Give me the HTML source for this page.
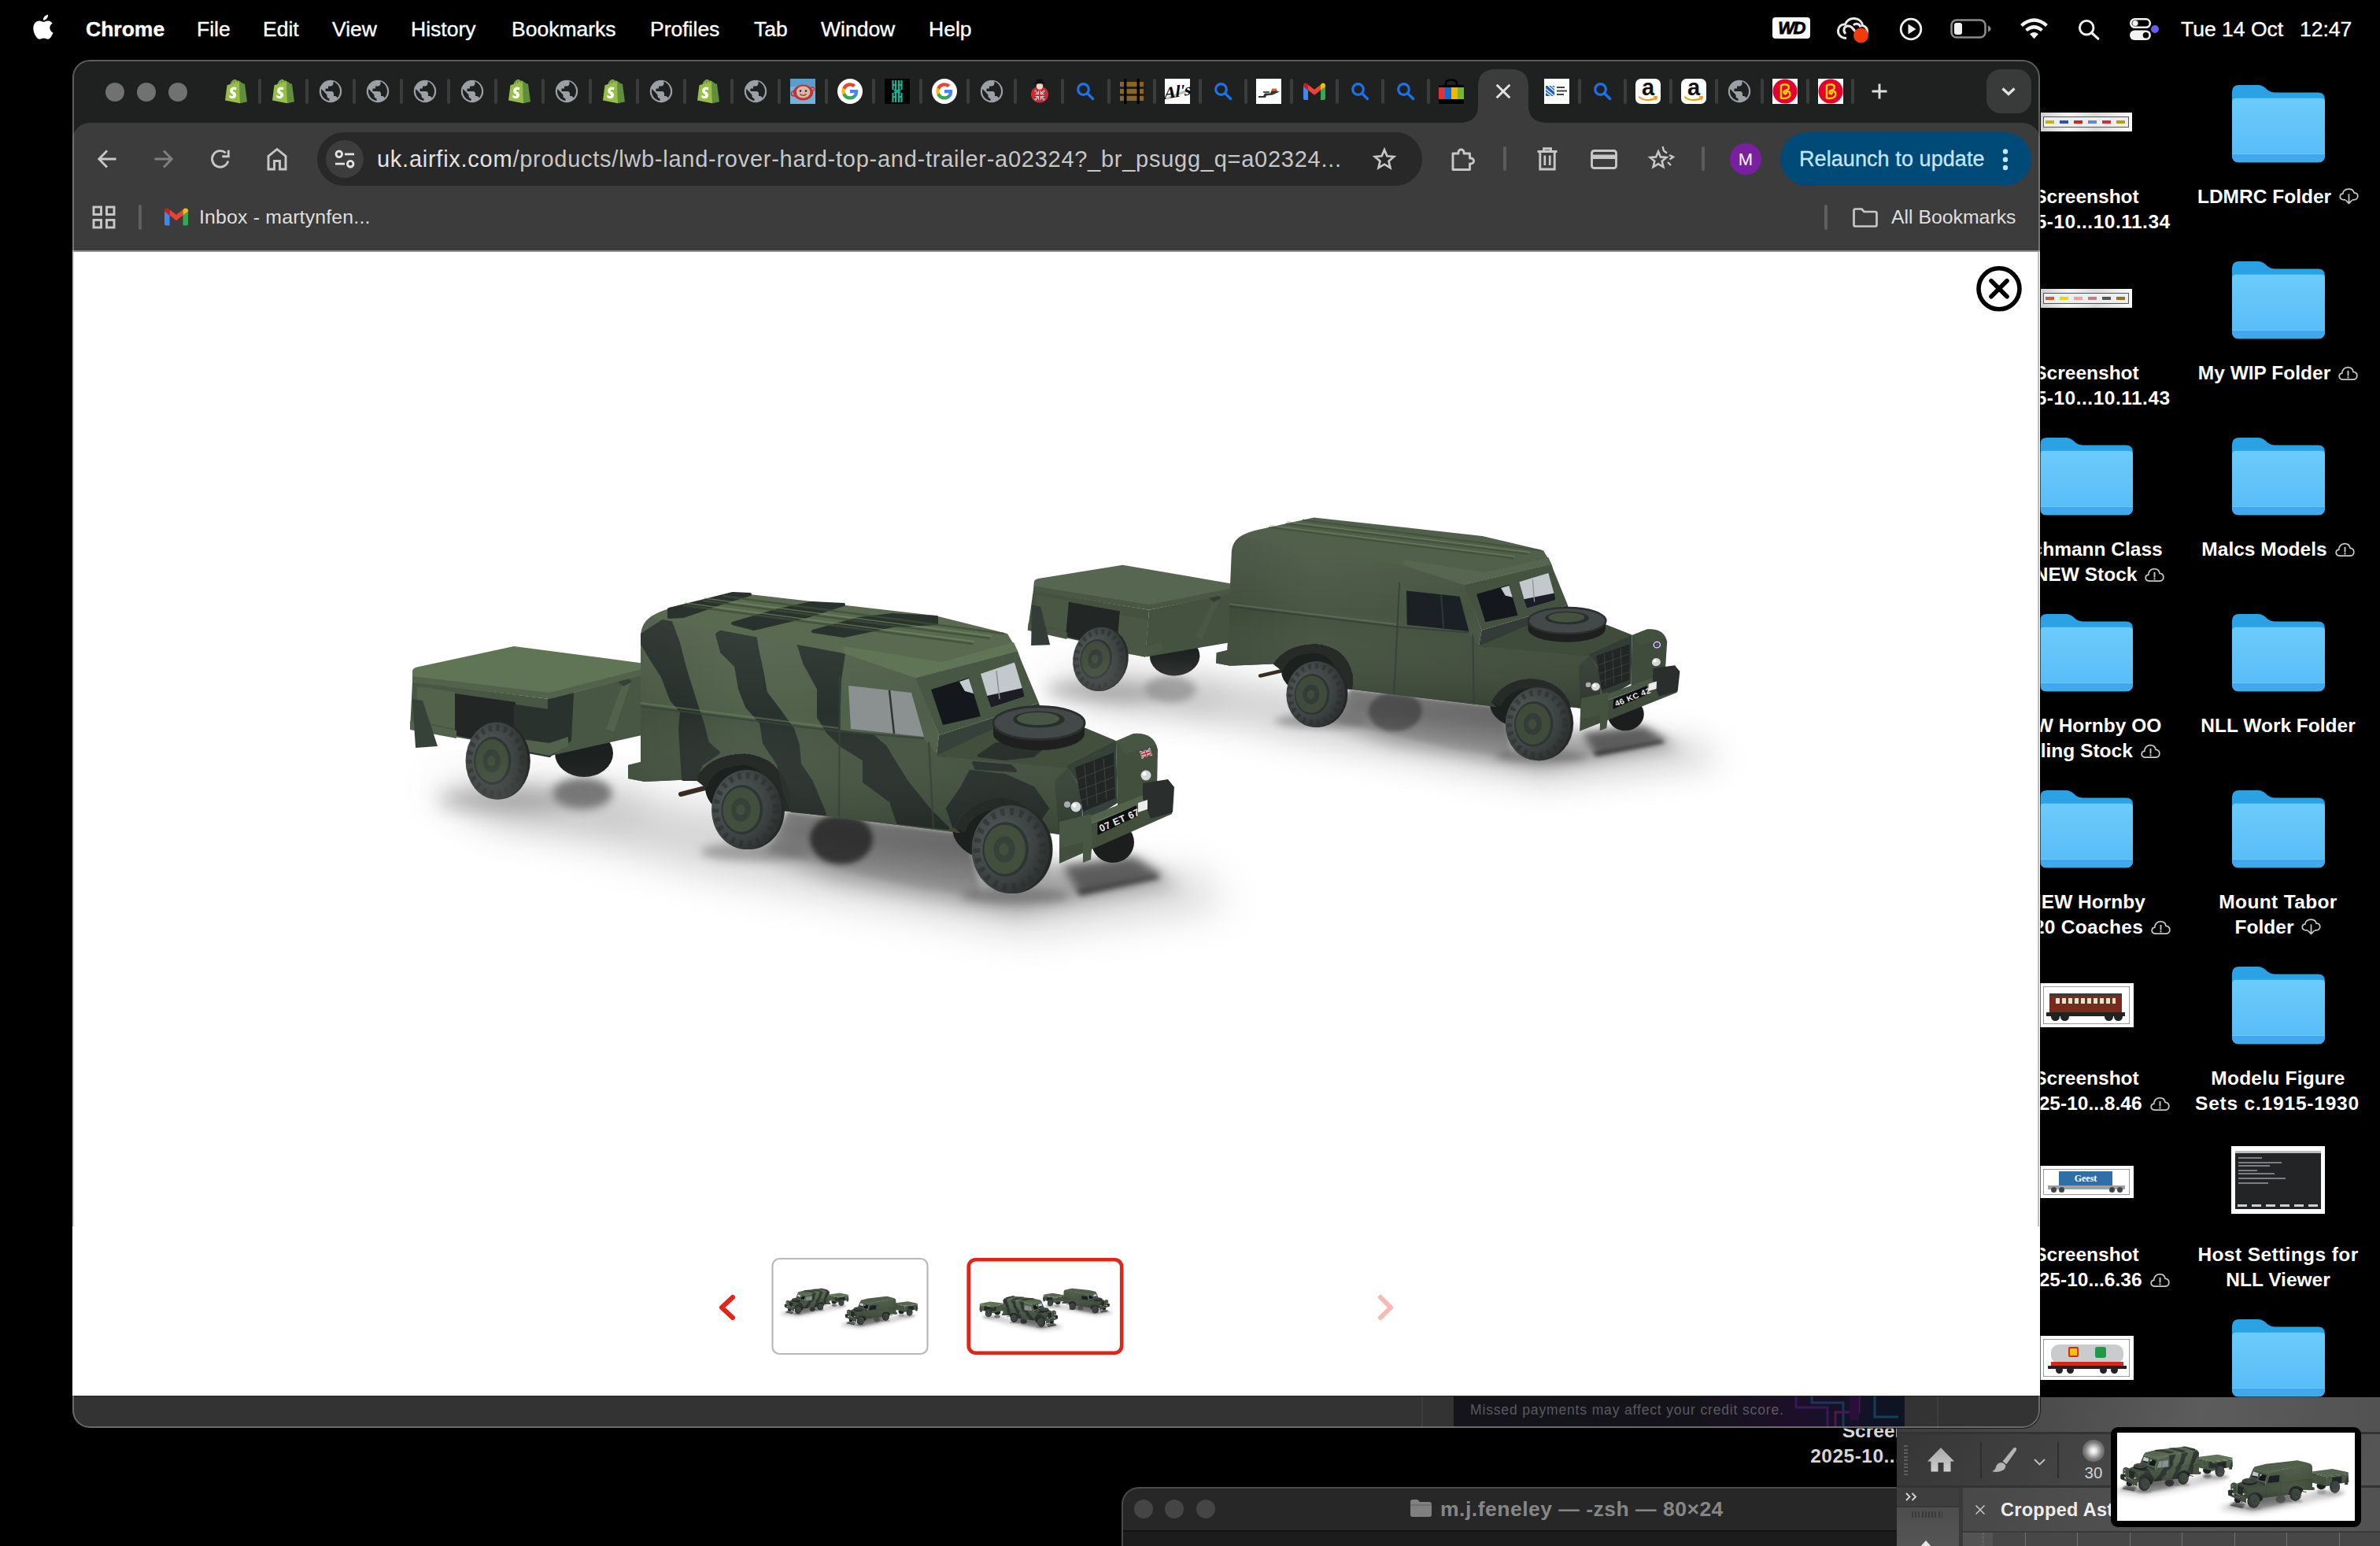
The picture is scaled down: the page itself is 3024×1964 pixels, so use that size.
<!DOCTYPE html>
<html><head><meta charset="utf-8"><title>LWB Land Rover</title>
<style>
*{box-sizing:border-box;margin:0;padding:0}
html,body{width:3024px;height:1964px;overflow:hidden;background:#000}
body{position:relative;font-family:"Liberation Sans",sans-serif;color:#fff}
.a{position:absolute;white-space:nowrap}
svg{position:absolute;overflow:visible}
/* menu bar */
.mi{position:absolute;top:14.500px;font-size:26.500px;-webkit-text-stroke:0.350px #fff;line-height:44px;height:44px;white-space:nowrap;color:#fff}
/* desktop */
.lbl{position:absolute;font-weight:bold;font-size:24.5px;line-height:32px;text-align:center;white-space:nowrap;color:#fff}
/* chrome */
#win{position:absolute;left:92px;top:76px;width:2500px;height:1738px;border-radius:22px;background:#1f2020;overflow:hidden;box-shadow:0 0 0 1px rgba(0,0,0,.6)}
#win:after{content:"";position:absolute;inset:0;border-radius:22px;border:2px solid rgba(255,255,255,.28);pointer-events:none}
#tool{position:absolute;left:0;top:80px;width:2500px;height:163px;background:#3c3c3c;border-radius:22px 22px 0 0}
#page{position:absolute;left:0;top:242px;width:2500px;height:1455px;background:#fff;border-top:2px solid #8d8d8d}
#strip{position:absolute;left:0;top:1698px;width:2500px;height:40px;background:#333}
.sep{position:absolute;top:24px;width:4px;height:32px;border-radius:2px;background:#3b3d3d}
.fav{position:absolute;top:24px;width:32px;height:32px}
.c1{fill:var(--c1)}.c2{fill:var(--c2)}.c3{fill:var(--c3)}.c4{fill:var(--c4)}.c5{fill:var(--c5)}.c6{fill:var(--c6)}.win{fill:var(--win)}.camo{display:var(--camo);fill:#2a322e;stroke:#2a322e;stroke-width:4;stroke-linejoin:round}
.pl{display:var(--camo)}.pr{display:var(--nocamo)}.blob{opacity:var(--blob)}
.ln{fill:none;stroke:var(--c4);stroke-width:2.5}
.rigL{--c1:#52624b;--c2:#596a51;--c3:#485743;--c4:#364239;--c5:#607556;--c6:#414f3c;--win:#8b9091;--camo:inline;--nocamo:none;--blob:.8}
.rigR{--c1:#495744;--c2:#51604b;--c3:#44523f;--c4:#333c37;--c5:#576650;--c6:#3f4c3b;--win:#1b2024;--camo:none;--nocamo:inline;--blob:.45}
</style></head><body>

<!-- ================= MENU BAR ================= -->
<div id="menubar" class="a" style="left:0;top:0;width:3024px;height:76px;background:#000">
<svg style="left:41px;top:18px" width="27" height="33" viewBox="0 0 27 33"><path fill="#fff" d="M22.3 17.5c0-4 3.300-5.900 3.400-6-1.900-2.700-4.700-3.100-5.700-3.100-2.400-.2-4.700 1.400-5.900 1.400s-3.100-1.400-5.100-1.300c-2.600 0-5 1.500-6.400 3.900-2.700 4.700-.7 11.700 2 15.500 1.300 1.900 2.800 4 4.900 3.900 2-.1 2.700-1.300 5.100-1.300 2.400 0 3 1.300 5.100 1.200 2.100 0 3.400-1.900 4.700-3.800 1.500-2.200 2.100-4.300 2.100-4.400-.1 0-4.100-1.600-4.200-6zM18.400 5.600c1.100-1.300 1.800-3.100 1.600-4.900-1.500.1-3.400 1-4.500 2.300-1 1.100-1.800 3-1.600 4.700 1.700.2 3.400-.8 4.500-2.100z"/></svg>
<div class="mi" style="left:109px;font-weight:bold">Chrome</div>
<div class="mi" style="left:250px">File</div>
<div class="mi" style="left:334px">Edit</div>
<div class="mi" style="left:422px">View</div>
<div class="mi" style="left:522px">History</div>
<div class="mi" style="left:650px">Bookmarks</div>
<div class="mi" style="left:826px">Profiles</div>
<div class="mi" style="left:958px">Tab</div>
<div class="mi" style="left:1043px">Window</div>
<div class="mi" style="left:1180px">Help</div>
<div class="mi" style="left:2771px">Tue 14 Oct</div>
<div class="mi" style="left:2922px">12:47</div>
<!-- WD -->
<div class="a" style="left:2252px;top:22px;width:48px;height:27px;border-radius:4px;background:#fff"></div>
<div class="a" style="left:2254px;top:22px;width:44px;height:27px;text-align:center;font-size:22px;line-height:28px;font-weight:bold;font-style:italic;color:#000;letter-spacing:-1.500px;-webkit-text-stroke:0.800px #000">WD</div>
<!-- creative cloud -->
<svg style="left:2333px;top:21px" width="44" height="34" viewBox="0 0 44 34"><g fill="none" stroke="#e8e8e8" stroke-width="3"><path d="M13 27.500 C6 27.500 2 23 2.500 17.500 C3 12.500 7 9.500 11.500 10 C13.500 5 18 2 23.500 2.500 C29.500 3 33 7 33.500 11.500 C37.500 12.500 39.500 15.500 39.500 19 C39.500 24 36 27.500 31 27.500"/><path d="M12 22 C8 18 10 12.500 14.500 12 C18.500 11.600 21 15 21 15 L26 21"/><path d="M22 11 C25 8 30 9 31 13.500"/></g><circle cx="31.500" cy="24" r="9.500" fill="#f03c0c"/></svg>
<!-- play -->
<svg style="left:2413px;top:22px" width="30" height="30" viewBox="0 0 30 30"><circle cx="15" cy="15" r="12.800" fill="none" stroke="#f0f0f0" stroke-width="2.800"/><path d="M11.500 8.500 L21.500 15 L11.500 21.500 Z" fill="#f0f0f0"/></svg>
<!-- battery -->
<svg style="left:2478px;top:24px" width="54" height="26" viewBox="0 0 54 26"><rect x="1.500" y="1.500" width="43" height="22" rx="6.500" fill="none" stroke="#8a8a8a" stroke-width="2.600"/><rect x="5" y="5" width="10" height="15" rx="3" fill="#f0f0f0"/><path d="M48 8.500 Q51.500 10 51.500 12.500 Q51.500 15 48 16.500 Z" fill="#8a8a8a"/></svg>
<!-- wifi -->
<svg style="left:2566px;top:23px" width="37" height="27" viewBox="0 0 37 27"><g fill="none" stroke="#f2f2f2" stroke-width="4.200" stroke-linecap="butt"><path d="M2.500 9.500 Q18.500 -4.500 34.500 9.500"/><path d="M8.500 15.500 Q18.500 7 28.500 15.500"/></g><path d="M13 20.300 Q18.500 15.500 24 20.300 L18.500 26.200 Z" fill="#f2f2f2"/></svg>
<!-- search -->
<svg style="left:2640px;top:24px" width="28" height="27" viewBox="0 0 28 27"><circle cx="11.200" cy="11.200" r="8.800" fill="none" stroke="#f2f2f2" stroke-width="2.900"/><path d="M17.500 17.500 L25.800 25.200" stroke="#f2f2f2" stroke-width="3.200" stroke-linecap="round"/></svg>
<!-- control centre -->
<svg style="left:2706px;top:23px" width="40" height="28" viewBox="0 0 40 28"><rect x="1.300" y="1.300" width="24.500" height="10.500" rx="5.250" fill="none" stroke="#f2f2f2" stroke-width="2.600"/><circle cx="7" cy="6.500" r="3.600" fill="#f2f2f2"/><rect x="0" y="15.500" width="27" height="12.500" rx="6.250" fill="#f2f2f2"/><circle cx="20.500" cy="21.700" r="3.800" fill="#000"/><circle cx="32" cy="14" r="5" fill="#6b5cf0"/></svg>

</div>

<!-- ================= DESKTOP ICONS ================= -->
<div id="desk">
<svg width="0" height="0" style="left:0;top:0"><defs>
<linearGradient id="ff" x1="0" y1="0" x2="0" y2="1"><stop offset="0" stop-color="#6ccbfb"/><stop offset="1" stop-color="#56bbf5"/></linearGradient>
<symbol id="folder" viewBox="0 0 118 98.500"><path d="M0 9 Q0 0 9 0 L33 0 Q38 0 42 3.500 L46 7 Q49 9.400 54 9.400 L109 9.400 Q118 9.400 118 18 L118 40 L0 40 Z" fill="#2aa3e6"/>
<path d="M0 22 Q0 16.800 5 16.800 L113 16.800 Q118 16.800 118 22 L118 89.500 Q118 98.500 109 98.500 L9 98.500 Q0 98.500 0 89.500 Z" fill="url(#ff)"/>
<path d="M0 87.500 L118 87.500 L118 89.500 Q118 98.500 109 98.500 L9 98.500 Q0 98.500 0 89.500 Z" fill="#3fa9ec"/><rect x="0" y="87" width="118" height="1" fill="#7dd2fc" opacity=".7"/></symbol>
<symbol id="cw" viewBox="0 0 26 19"><path d="M6.500 17.500 C3 17.500 1 15.300 1.200 12.800 C1.400 10.600 3 9.200 5 9 C5 5 8 1.300 12.500 1.300 C16.500 1.300 19.200 3.800 19.800 7.200 C22.800 7.400 24.800 9.600 24.800 12.300 C24.800 15.300 22.500 17.500 19.500 17.500 Z" fill="none" stroke="#c9c9c9" stroke-width="1.800"/><path d="M13 6.500 V11.800" stroke="#c9c9c9" stroke-width="2" stroke-linecap="round"/><circle cx="13" cy="14.600" r="1.200" fill="#c9c9c9"/></symbol>
<symbol id="cd" viewBox="0 0 26 22"><path d="M8.500 15.500 L6.500 15.500 C3 15.500 1 13.500 1.200 11 C1.400 8.800 3 7.400 5 7.200 C5 4 8 1.200 12.500 1.200 C16.500 1.200 19.200 3.300 19.800 6.200 C22.800 6.400 24.800 8.300 24.800 10.800 C24.800 13.500 22.500 15.500 19.500 15.500 L17.500 15.500" fill="none" stroke="#c9c9c9" stroke-width="1.800"/><path d="M13 8.500 V20 M9.200 16.500 L13 20.300 L16.800 16.500" fill="none" stroke="#c9c9c9" stroke-width="1.800" stroke-linecap="round" stroke-linejoin="round"/></symbol>
</defs></svg>
<svg style="left:2835.5px;top:108px" width="118" height="98.500"><use href="#folder"/></svg>
<svg style="left:2835.5px;top:332px" width="118" height="98.500"><use href="#folder"/></svg>
<svg style="left:2835.5px;top:556px" width="118" height="98.500"><use href="#folder"/></svg>
<svg style="left:2835.5px;top:780px" width="118" height="98.500"><use href="#folder"/></svg>
<svg style="left:2835.5px;top:1004px" width="118" height="98.500"><use href="#folder"/></svg>
<svg style="left:2835.5px;top:1228px" width="118" height="98.500"><use href="#folder"/></svg>
<svg style="left:2835.5px;top:1676px" width="118" height="98.500"><use href="#folder"/></svg>
<div class="lbl" style="left:2694.5px;top:234px;width:400px;letter-spacing:0.00px">LDMRC Folder<svg style="position:relative;display:inline-block;vertical-align:-2px;margin-left:10px" width="25" height="21"><use href="#cd"/></svg></div>
<div class="lbl" style="left:2694.5px;top:458px;width:400px;letter-spacing:0.00px">My WIP Folder<svg style="position:relative;display:inline-block;vertical-align:-2px;margin-left:10px" width="25" height="19"><use href="#cw"/></svg></div>
<div class="lbl" style="left:2694.5px;top:682px;width:400px;letter-spacing:0.00px">Malcs Models<svg style="position:relative;display:inline-block;vertical-align:-2px;margin-left:10px" width="25" height="19"><use href="#cw"/></svg></div>
<div class="lbl" style="left:2694.5px;top:906px;width:400px;letter-spacing:0.00px">NLL Work Folder</div>
<div class="lbl" style="left:2694.5px;top:1130px;width:400px;letter-spacing:0.35px">Mount Tabor</div>
<div class="lbl" style="left:2694.5px;top:1162px;width:400px;letter-spacing:0.00px">Folder<svg style="position:relative;display:inline-block;vertical-align:-2px;margin-left:10px" width="25" height="21"><use href="#cd"/></svg></div>
<div class="lbl" style="left:2694.5px;top:1354px;width:400px;letter-spacing:0.22px">Modelu Figure</div>
<div class="lbl" style="left:2693.5px;top:1386px;width:400px;letter-spacing:0.80px">Sets c.1915-1930</div>
<div class="lbl" style="left:2694.5px;top:1578px;width:400px;letter-spacing:0.40px">Host Settings for</div>
<div class="lbl" style="left:2694.5px;top:1610px;width:400px;letter-spacing:0.00px">NLL Viewer</div>
<div class="a" style="left:2835px;top:1456px;width:119px;height:86px;background:#fff"></div><div class="a" style="left:2840px;top:1462px;width:109px;height:74px;background:#222426"></div>
<div class="a" style="left:2840px;top:1462px;width:109px;height:3px;background:#bdbdbd"></div>
<div class="a" style="left:2844px;top:1470px;width:30px;height:2px;background:#7c7f82"></div>
<div class="a" style="left:2844px;top:1476px;width:55px;height:2px;background:#7c7f82"></div>
<div class="a" style="left:2844px;top:1480px;width:40px;height:2px;background:#7c7f82"></div>
<div class="a" style="left:2844px;top:1486px;width:24px;height:2px;background:#7c7f82"></div>
<div class="a" style="left:2844px;top:1490px;width:46px;height:2px;background:#7c7f82"></div>
<div class="a" style="left:2844px;top:1496px;width:60px;height:2px;background:#7c7f82"></div>
<div class="a" style="left:2844px;top:1502px;width:38px;height:2px;background:#7c7f82"></div>
<div class="a" style="left:2843px;top:1530px;width:12px;height:3px;background:#cfcfcf"></div>
<div class="a" style="left:2861px;top:1530px;width:12px;height:3px;background:#cfcfcf"></div>
<div class="a" style="left:2879px;top:1530px;width:12px;height:3px;background:#cfcfcf"></div>
<div class="a" style="left:2897px;top:1530px;width:12px;height:3px;background:#cfcfcf"></div>
<div class="a" style="left:2915px;top:1530px;width:12px;height:3px;background:#cfcfcf"></div>
<div class="a" style="left:2933px;top:1530px;width:12px;height:3px;background:#cfcfcf"></div>
<svg style="left:2592.0px;top:556px" width="118" height="98.500"><use href="#folder"/></svg>
<svg style="left:2592.0px;top:780px" width="118" height="98.500"><use href="#folder"/></svg>
<svg style="left:2592.0px;top:1004px" width="118" height="98.500"><use href="#folder"/></svg>
<div class="lbl" style="left:2451.0px;top:234px;width:400px;letter-spacing:0.00px">Screenshot</div>
<div class="lbl" style="left:2451.0px;top:266px;width:400px;letter-spacing:0.50px">2025-10...10.11.34</div>
<div class="lbl" style="left:2451.0px;top:458px;width:400px;letter-spacing:0.00px">Screenshot</div>
<div class="lbl" style="left:2451.0px;top:490px;width:400px;letter-spacing:0.50px">2025-10...10.11.43</div>
<div class="lbl" style="left:2449.0px;top:682px;width:400px;letter-spacing:0.00px">Bachmann Class</div>
<div class="lbl" style="left:2467.6px;top:714px;width:400px;letter-spacing:0.00px">NEW Stock<svg style="position:relative;display:inline-block;vertical-align:-2px;margin-left:10px" width="25" height="19"><use href="#cw"/></svg></div>
<div class="lbl" style="left:2449.0px;top:906px;width:400px;letter-spacing:0.00px">NEW Hornby OO</div>
<div class="lbl" style="left:2449.0px;top:938px;width:400px;letter-spacing:0.00px">Rolling Stock<svg style="position:relative;display:inline-block;vertical-align:-2px;margin-left:10px" width="25" height="19"><use href="#cw"/></svg></div>
<div class="lbl" style="left:2451.0px;top:1130px;width:400px;letter-spacing:0.00px">NEW Hornby</div>
<div class="lbl" style="left:2471.0px;top:1162px;width:400px;letter-spacing:0.30px">20 Coaches<svg style="position:relative;display:inline-block;vertical-align:-2px;margin-left:10px" width="25" height="19"><use href="#cw"/></svg></div>
<div class="lbl" style="left:2451.0px;top:1354px;width:400px;letter-spacing:0.00px">Screenshot</div>
<div class="lbl" style="left:2460.0px;top:1386px;width:400px;letter-spacing:0.00px">2025-10...8.46<svg style="position:relative;display:inline-block;vertical-align:-2px;margin-left:10px" width="25" height="19"><use href="#cw"/></svg></div>
<div class="lbl" style="left:2451.0px;top:1578px;width:400px;letter-spacing:0.00px">Screenshot</div>
<div class="lbl" style="left:2460.0px;top:1610px;width:400px;letter-spacing:0.00px">2025-10...6.36<svg style="position:relative;display:inline-block;vertical-align:-2px;margin-left:10px" width="25" height="19"><use href="#cw"/></svg></div>
<div class="a" style="left:2593px;top:143px;width:116px;height:24px;background:linear-gradient(90deg,#d0d0d0,#f4f4f4 30%,#dcdcdc 60%,#fafafa)"></div>
<div class="a" style="left:2596px;top:148px;width:109px;height:14px;border:1px solid #555;background:#eee"></div>
<div class="a" style="left:2599px;top:153px;width:11px;height:4px;background:#c8b400"></div>
<div class="a" style="left:2617px;top:153px;width:11px;height:4px;background:#2a50c8"></div>
<div class="a" style="left:2635px;top:153px;width:11px;height:4px;background:#e02020"></div>
<div class="a" style="left:2653px;top:153px;width:11px;height:4px;background:#5a8ad8"></div>
<div class="a" style="left:2671px;top:153px;width:11px;height:4px;background:#d83030"></div>
<div class="a" style="left:2689px;top:153px;width:11px;height:4px;background:#b8a000"></div>
<div class="a" style="left:2593px;top:367px;width:116px;height:24px;background:linear-gradient(90deg,#d0d0d0,#f4f4f4 30%,#dcdcdc 60%,#fafafa)"></div>
<div class="a" style="left:2596px;top:372px;width:109px;height:14px;border:1px solid #555;background:#eee"></div>
<div class="a" style="left:2599px;top:377px;width:11px;height:4px;background:#d85a30"></div>
<div class="a" style="left:2617px;top:377px;width:11px;height:4px;background:#e8d800"></div>
<div class="a" style="left:2635px;top:377px;width:11px;height:4px;background:#f0a0a0"></div>
<div class="a" style="left:2653px;top:377px;width:11px;height:4px;background:#c08080"></div>
<div class="a" style="left:2671px;top:377px;width:11px;height:4px;background:#555"></div>
<div class="a" style="left:2689px;top:377px;width:11px;height:4px;background:#a07020"></div>
<div class="a" style="left:2592px;top:1249px;width:119px;height:56px;background:#fff"></div>
<div class="a" style="left:2604px;top:1262px;width:92px;height:24px;background:#7a2a1c;border-top:3px solid #3a3a3a"></div>
<div class="a" style="left:2612px;top:1268px;width:76px;height:7px;background:repeating-linear-gradient(90deg,#e8e0d0 0 5px,#7a2a1c 5px 8px)"></div>
<div class="a" style="left:2600px;top:1286px;width:100px;height:5px;background:#222"></div>
<div class="a" style="left:2606px;top:1286px;width:11px;height:11px;border-radius:50%;background:#222"></div>
<div class="a" style="left:2618px;top:1286px;width:11px;height:11px;border-radius:50%;background:#222"></div>
<div class="a" style="left:2674px;top:1286px;width:11px;height:11px;border-radius:50%;background:#222"></div>
<div class="a" style="left:2686px;top:1286px;width:11px;height:11px;border-radius:50%;background:#222"></div>
<div class="a" style="left:2592px;top:1481px;width:119px;height:41px;background:#fff"></div>
<div class="a" style="left:2616px;top:1488px;width:68px;height:18px;background:#2f6fa8;color:#fff;font:bold 12px 'Liberation Serif',serif;text-align:center;line-height:18px">Geest</div>
<div class="a" style="left:2602px;top:1506px;width:98px;height:5px;background:#9aa0a6"></div>
<div class="a" style="left:2606px;top:1508px;width:7px;height:7px;border-radius:50%;background:#444"></div>
<div class="a" style="left:2616px;top:1508px;width:7px;height:7px;border-radius:50%;background:#444"></div>
<div class="a" style="left:2680px;top:1508px;width:7px;height:7px;border-radius:50%;background:#444"></div>
<div class="a" style="left:2690px;top:1508px;width:7px;height:7px;border-radius:50%;background:#444"></div>
<div class="a" style="left:2592px;top:1697px;width:119px;height:56px;background:#fff"></div>
<div class="a" style="left:2606px;top:1708px;width:92px;height:24px;border-radius:10px;background:#c9cbcd"></div>
<div class="a" style="left:2606px;top:1730px;width:92px;height:5px;background:#d42a1e"></div>
<div class="a" style="left:2628px;top:1711px;width:13px;height:13px;border-radius:2px;background:#f4c400;border:2px solid #d42a1e"></div><div class="a" style="left:2662px;top:1711px;width:14px;height:14px;border-radius:3px;background:#1f9a48"></div>
<div class="a" style="left:2602px;top:1735px;width:100px;height:4px;background:#222"></div>
<div class="a" style="left:2612px;top:1736px;width:9px;height:9px;border-radius:50%;background:#222"></div>
<div class="a" style="left:2626px;top:1736px;width:9px;height:9px;border-radius:50%;background:#222"></div>
<div class="a" style="left:2668px;top:1736px;width:9px;height:9px;border-radius:50%;background:#222"></div>
<div class="a" style="left:2682px;top:1736px;width:9px;height:9px;border-radius:50%;background:#222"></div>
<div class="a" style="left:2596px;top:1253px;width:110px;height:48px;border:1px solid #9a9a9a"></div>
<div class="a" style="left:2596px;top:1485px;width:110px;height:33px;border:1px solid #9a9a9a"></div>
<div class="a" style="left:2596px;top:1701px;width:110px;height:48px;border:1px solid #9a9a9a"></div>
</div>

<!-- ================= BOTTOM WINDOWS ================= -->
<!-- hidden desktop label (row 8, col centre 2407.5) -->
<div class="lbl" style="left:2207.500px;top:1802px;width:400px;color:#d6d6d6">Screenshot</div>
<div class="lbl" style="left:2207.500px;top:1834px;width:400px;color:#d6d6d6;letter-spacing:0.500px">2025-10...10.12.01</div>
<!-- terminal window -->
<div class="a" style="left:1425px;top:1889px;width:1010px;height:120px;border-radius:22px 22px 0 0;background:#1c1c1c;overflow:hidden;box-shadow:0 0 0 1px #000">
 <div class="a" style="left:0;top:0;width:1010px;height:57px;background:#272727;border-bottom:2px solid #111"></div>
 <div class="a" style="left:0;top:0;width:1010px;height:120px;border-radius:22px 22px 0 0;border:2px solid #4a4a4a;border-bottom:none"></div>
 <div class="a" style="left:15.500px;top:16px;width:24px;height:24px;border-radius:12px;background:#454545"></div>
 <div class="a" style="left:55px;top:16px;width:24px;height:24px;border-radius:12px;background:#454545"></div>
 <div class="a" style="left:94.500px;top:16px;width:24px;height:24px;border-radius:12px;background:#454545"></div>
 <svg style="left:367px;top:15px" width="27" height="24" viewBox="0 0 27 24"><path d="M0 4 Q0 1 3 1 L9 1 L12 4 L24 4 Q27 4 27 7 L27 20 Q27 23 24 23 L3 23 Q0 23 0 20 Z" fill="#808080"/><path d="M0 8 L27 8" stroke="#6a6a6a" stroke-width="1.500"/></svg>
 <div id="term" class="a" style="left:405px;top:8px;font-size:26.500px;line-height:40px;font-weight:bold;color:#868686;letter-spacing:0.5px">m.j.feneley — -zsh — 80×24</div>
</div>
<!-- photoshop window -->
<div class="a" style="left:2410px;top:1775px;width:700px;height:200px;background:#4c4c4c;overflow:hidden">
 <div class="a" style="left:0;top:0;width:700px;height:46px;background:linear-gradient(100deg,#3c3c3c 0,#4a4a4a 25%,#5c5c5c 55%,#4e4e4e 100%)"></div>
 <div class="a" style="left:0;top:44px;width:700px;height:3px;background:#333"></div>
 <!-- options bar -->
 <div class="a" style="left:0;top:47px;width:700px;height:66px;background:linear-gradient(120deg,#363636 0,#404040 25%,#4f4f4f 60%,#585858 100%)"></div>
 <div class="a" style="left:9px;top:61px;width:5px;height:38px;background:repeating-linear-gradient(180deg,#5e5e5e 0 2px,transparent 2px 4.500px)"></div>
 <svg style="left:39px;top:64px" width="34" height="31" viewBox="0 0 34 31"><defs><linearGradient id="hg" x1="0" y1="0" x2="0" y2="1"><stop offset="0" stop-color="#a8a8a8"/><stop offset="1" stop-color="#cfcfcf"/></linearGradient></defs><path d="M17 0 L34 17.500 L29.500 17.500 L29.500 30.500 L20.500 30.500 L20.500 19 L13.500 19 L13.500 30.500 L4.500 30.500 L4.500 17.500 L0 17.500 Z" fill="url(#hg)"/></svg>
 <div class="a" style="left:105.500px;top:57px;width:2.500px;height:46px;background:#2e2e2e"></div>
 <svg style="left:121px;top:63px" width="32" height="33" viewBox="0 0 32 33"><path d="M30 1 Q32 2 30.500 5 L18.500 22 L13.500 18.500 L27 2 Q28.500 0 30 1 Z" fill="#b4b4b4"/><path d="M12 20 Q16 20.500 17.500 24 Q17 30 9 31.500 Q4 32.500 0 31 Q4 29.500 5 26 Q6 20.500 12 20 Z" fill="#b4b4b4"/></svg>
 <svg style="left:174px;top:78px" width="15" height="9" viewBox="0 0 15 9"><path d="M1 1 L7.500 7.500 L14 1" fill="none" stroke="#c0c0c0" stroke-width="1.800"/></svg>
 <div class="a" style="left:203.500px;top:57px;width:2.500px;height:46px;background:#2e2e2e"></div>
 <div class="a" style="left:236px;top:54px;width:28px;height:28px;border-radius:14px;background:radial-gradient(circle,#fff 0,#e4e4e4 18%,rgba(170,170,170,.55) 55%,rgba(110,110,110,0) 100%)"></div>
 <div class="a" style="left:230px;top:82px;width:40px;text-align:center;font-size:20.500px;line-height:28px;color:#d2d2d2">30</div>
 <div class="a" style="left:0;top:112px;width:700px;height:3px;background:#333"></div>
 <!-- tab bar row -->
 <div class="a" style="left:0;top:115px;width:79px;height:23px;background:#3e3e3e"></div>
 <svg style="left:11px;top:121px" width="16" height="11" viewBox="0 0 16 11"><path d="M1 1 L5.500 5.500 L1 10 M8.500 1 L13 5.500 L8.500 10" fill="none" stroke="#d8d8d8" stroke-width="1.800"/></svg>
 <div class="a" style="left:0;top:138px;width:79px;height:2px;background:#383838"></div>
 <div class="a" style="left:0;top:140px;width:79px;height:60px;background:linear-gradient(180deg,#4d4d4d,#575757)"></div>
 <div class="a" style="left:19px;top:145px;width:39px;height:8px;background:repeating-linear-gradient(90deg,#3a3a3a 0 2px,transparent 2px 4.200px)"></div>
 <svg style="left:28px;top:182px" width="18" height="10" viewBox="0 0 18 10"><path d="M9 0 L18 10 L0 10 Z" fill="#e8e8e8"/></svg>
 <div class="a" style="left:79px;top:115px;width:5px;height:85px;background:#3a3a3a"></div>
 <div class="a" style="left:84px;top:115px;width:620px;height:56px;background:linear-gradient(100deg,#484848,#555 60%,#505050)"></div>
 <svg style="left:100px;top:137px" width="12" height="12" viewBox="0 0 12 12"><path d="M0.500 0.500 L11.500 11.500 M11.500 0.500 L0.500 11.500" stroke="#c8c8c8" stroke-width="1.500"/></svg>
 <div id="pst" class="a" style="left:132px;top:123px;font-size:23.500px;line-height:40px;font-weight:bold;color:#ececec;letter-spacing:0.300px">Cropped Astra</div>
 <div class="a" style="left:84px;top:170px;width:620px;height:2px;background:#3a3a3a"></div>
 <!-- ruler -->
 <div class="a" style="left:84px;top:172px;width:620px;height:30px;background:#474747"></div>
 <div class="a" style="left:84px;top:172px;width:38px;height:30px;background:#535353"></div>
 <div class="a" style="left:108px;top:172px;width:3px;height:30px;background:repeating-linear-gradient(180deg,#6a6a6a 0 1px,transparent 1px 2.500px)"></div>
 <div class="a" style="left:163px;top:172px;width:1.200px;height:30px;background:#717171"></div>
 <div class="a" style="left:229px;top:172px;width:1.200px;height:30px;background:#717171"></div>
 <div class="a" style="left:296px;top:172px;width:1.200px;height:30px;background:#717171"></div>
 <div class="a" style="left:362px;top:172px;width:1.200px;height:30px;background:#717171"></div>
 <div class="a" style="left:429px;top:172px;width:1.200px;height:30px;background:#717171"></div>
 <div class="a" style="left:495px;top:172px;width:1.200px;height:30px;background:#717171"></div>
 <div class="a" style="left:562px;top:172px;width:1.200px;height:30px;background:#717171"></div>
</div>


<!-- ================= CHROME WINDOW ================= -->
<div id="win">
<div class="a" style="left:42px;top:29px;width:24px;height:24px;border-radius:50%;background:#717171"></div>
<div class="a" style="left:82px;top:29px;width:24px;height:24px;border-radius:50%;background:#717171"></div>
<div class="a" style="left:122px;top:29px;width:24px;height:24px;border-radius:50%;background:#717171"></div>
<svg class="fav" style="left:192.0px" width="32" height="32" viewBox="0 0 32 32"><path d="M20.5 3.5 L22.5 4.2 L24.2 6 L27 6.4 L30 29.3 L21 31.2 Z" fill="#5e8e3e"/><path d="M4.5 8.2 L8.5 7 C9.5 3.5 11.5 1.2 14.2 1 C15.6 .9 16.6 1.6 17.2 2.6 C18.6 2.4 19.8 2.8 20.5 3.5 L21 31.2 L2 27.6 Z" fill="#95bf47"/><path d="M9.8 6.8 C10.6 4.2 12.2 2.6 14 2.4 M13.4 5.8 C13.8 3.6 15 2.6 16.4 2.9 M16.8 3 C17.6 3.6 17.8 4.6 17.8 5" fill="none" stroke="#5e8e3e" stroke-width="1.1"/><path d="M16.6 11.2 L15.6 14.4 C14.6 13.9 13.6 13.7 12.8 13.9 C11.4 14.2 11.5 15.4 12.4 16 C14 17.1 16.4 18 16.2 21 C16 24.2 13 25.8 10 25 C8.6 24.6 7.6 23.8 7 23 L7.8 20.4 C8.8 21.4 10.2 22.2 11.2 22 C12.4 21.8 12.4 20.6 11.6 20 C9.6 18.6 7.8 17.4 8.2 14.4 C8.7 11 12.6 9.4 16.6 11.2 Z" fill="#fff"/></svg>
<div class="sep" style="left:236.0px"></div>
<svg class="fav" style="left:252.0px" width="32" height="32" viewBox="0 0 32 32"><path d="M20.5 3.5 L22.5 4.2 L24.2 6 L27 6.4 L30 29.3 L21 31.2 Z" fill="#5e8e3e"/><path d="M4.5 8.2 L8.5 7 C9.5 3.5 11.5 1.2 14.2 1 C15.6 .9 16.6 1.6 17.2 2.6 C18.6 2.4 19.8 2.8 20.5 3.5 L21 31.2 L2 27.6 Z" fill="#95bf47"/><path d="M9.8 6.8 C10.6 4.2 12.2 2.6 14 2.4 M13.4 5.8 C13.8 3.6 15 2.6 16.4 2.9 M16.8 3 C17.6 3.6 17.8 4.6 17.8 5" fill="none" stroke="#5e8e3e" stroke-width="1.1"/><path d="M16.6 11.2 L15.6 14.4 C14.6 13.9 13.6 13.7 12.8 13.9 C11.4 14.2 11.5 15.4 12.4 16 C14 17.1 16.4 18 16.2 21 C16 24.2 13 25.8 10 25 C8.6 24.6 7.6 23.8 7 23 L7.8 20.4 C8.8 21.4 10.2 22.2 11.2 22 C12.4 21.8 12.4 20.6 11.6 20 C9.6 18.6 7.8 17.4 8.2 14.4 C8.7 11 12.6 9.4 16.6 11.2 Z" fill="#fff"/></svg>
<div class="sep" style="left:296.0px"></div>
<svg class="fav" style="left:312.0px" width="32" height="32" viewBox="0 0 32 32"><circle cx="16" cy="16" r="14.200" fill="#9aa0a6"/><path d="M13 3.5 L19 3.5 L19 6 C19 7.6 17.6 9 16 9 L13 9 L13 12 L9.500 12 L9.500 15.500 L16.500 15.500 C18.2 15.500 19.5 16.800 19.5 18.500 L19.5 22 L21.500 22 C23 22 24.2 23 24.700 24.300 C26.700 22.100 27.900 19.200 27.900 16 C27.900 11 24.800 6.700 20.500 4.900 L20.500 5.500 C20.500 7.400 18.900 9 17 9 Z" fill="#1f2020" opacity="0"/><path d="M19.5 3.600 L19.5 6 C19.5 7.900 17.900 9.500 16 9.500 L13 9.500 L13 12.500 L9.500 12.500 L9.500 16 L17 16 C18.700 16 20 17.300 20 19 L20 22 L21.500 22 C23 22 24.300 23 24.800 24.400 C26.800 22.200 28 19.200 28 16 C28 10.400 24.500 5.500 19.5 3.600 Z" fill="#1f2020"/><path d="M4.400 13 C4.100 14 4 15 4 16 C4 22.100 8.600 27.200 14.500 27.900 L14.500 25 C12.800 25 11.500 23.700 11.500 22 L11.500 20.500 Z" fill="#1f2020"/></svg>
<div class="sep" style="left:356.0px"></div>
<svg class="fav" style="left:372.0px" width="32" height="32" viewBox="0 0 32 32"><circle cx="16" cy="16" r="14.200" fill="#9aa0a6"/><path d="M13 3.5 L19 3.5 L19 6 C19 7.6 17.6 9 16 9 L13 9 L13 12 L9.500 12 L9.500 15.500 L16.500 15.500 C18.2 15.500 19.5 16.800 19.5 18.500 L19.5 22 L21.500 22 C23 22 24.2 23 24.700 24.300 C26.700 22.100 27.900 19.200 27.900 16 C27.900 11 24.800 6.700 20.500 4.900 L20.500 5.500 C20.500 7.400 18.900 9 17 9 Z" fill="#1f2020" opacity="0"/><path d="M19.5 3.600 L19.5 6 C19.5 7.900 17.900 9.500 16 9.500 L13 9.500 L13 12.500 L9.500 12.500 L9.500 16 L17 16 C18.700 16 20 17.300 20 19 L20 22 L21.500 22 C23 22 24.300 23 24.800 24.400 C26.800 22.200 28 19.200 28 16 C28 10.400 24.500 5.500 19.5 3.600 Z" fill="#1f2020"/><path d="M4.400 13 C4.100 14 4 15 4 16 C4 22.100 8.600 27.200 14.500 27.900 L14.500 25 C12.800 25 11.500 23.700 11.500 22 L11.500 20.500 Z" fill="#1f2020"/></svg>
<div class="sep" style="left:416.0px"></div>
<svg class="fav" style="left:432.0px" width="32" height="32" viewBox="0 0 32 32"><circle cx="16" cy="16" r="14.200" fill="#9aa0a6"/><path d="M13 3.5 L19 3.5 L19 6 C19 7.6 17.6 9 16 9 L13 9 L13 12 L9.500 12 L9.500 15.500 L16.500 15.500 C18.2 15.500 19.5 16.800 19.5 18.500 L19.5 22 L21.500 22 C23 22 24.2 23 24.700 24.300 C26.700 22.100 27.900 19.200 27.900 16 C27.900 11 24.800 6.700 20.500 4.900 L20.500 5.500 C20.500 7.400 18.900 9 17 9 Z" fill="#1f2020" opacity="0"/><path d="M19.5 3.600 L19.5 6 C19.5 7.900 17.900 9.500 16 9.500 L13 9.500 L13 12.500 L9.500 12.500 L9.500 16 L17 16 C18.700 16 20 17.300 20 19 L20 22 L21.500 22 C23 22 24.300 23 24.800 24.400 C26.800 22.200 28 19.200 28 16 C28 10.400 24.500 5.500 19.5 3.600 Z" fill="#1f2020"/><path d="M4.400 13 C4.100 14 4 15 4 16 C4 22.100 8.600 27.200 14.500 27.900 L14.500 25 C12.800 25 11.500 23.700 11.500 22 L11.500 20.500 Z" fill="#1f2020"/></svg>
<div class="sep" style="left:476.0px"></div>
<svg class="fav" style="left:492.0px" width="32" height="32" viewBox="0 0 32 32"><circle cx="16" cy="16" r="14.200" fill="#9aa0a6"/><path d="M13 3.5 L19 3.5 L19 6 C19 7.6 17.6 9 16 9 L13 9 L13 12 L9.500 12 L9.500 15.500 L16.500 15.500 C18.2 15.500 19.5 16.800 19.5 18.500 L19.5 22 L21.500 22 C23 22 24.2 23 24.700 24.300 C26.700 22.100 27.900 19.200 27.900 16 C27.900 11 24.800 6.700 20.500 4.900 L20.500 5.500 C20.500 7.400 18.900 9 17 9 Z" fill="#1f2020" opacity="0"/><path d="M19.5 3.600 L19.5 6 C19.5 7.900 17.900 9.500 16 9.500 L13 9.500 L13 12.500 L9.500 12.500 L9.500 16 L17 16 C18.700 16 20 17.300 20 19 L20 22 L21.500 22 C23 22 24.300 23 24.800 24.400 C26.800 22.200 28 19.200 28 16 C28 10.400 24.500 5.500 19.5 3.600 Z" fill="#1f2020"/><path d="M4.400 13 C4.100 14 4 15 4 16 C4 22.100 8.600 27.200 14.500 27.900 L14.500 25 C12.800 25 11.500 23.700 11.500 22 L11.500 20.500 Z" fill="#1f2020"/></svg>
<div class="sep" style="left:536.0px"></div>
<svg class="fav" style="left:552.0px" width="32" height="32" viewBox="0 0 32 32"><path d="M20.5 3.5 L22.5 4.2 L24.2 6 L27 6.4 L30 29.3 L21 31.2 Z" fill="#5e8e3e"/><path d="M4.5 8.2 L8.5 7 C9.5 3.5 11.5 1.2 14.2 1 C15.6 .9 16.6 1.6 17.2 2.6 C18.6 2.4 19.8 2.8 20.5 3.5 L21 31.2 L2 27.6 Z" fill="#95bf47"/><path d="M9.8 6.8 C10.6 4.2 12.2 2.6 14 2.4 M13.4 5.8 C13.8 3.6 15 2.6 16.4 2.9 M16.8 3 C17.6 3.6 17.8 4.6 17.8 5" fill="none" stroke="#5e8e3e" stroke-width="1.1"/><path d="M16.6 11.2 L15.6 14.4 C14.6 13.9 13.6 13.7 12.8 13.9 C11.4 14.2 11.5 15.4 12.4 16 C14 17.1 16.4 18 16.2 21 C16 24.2 13 25.8 10 25 C8.6 24.6 7.6 23.8 7 23 L7.8 20.4 C8.8 21.4 10.2 22.2 11.2 22 C12.4 21.8 12.4 20.6 11.6 20 C9.6 18.6 7.8 17.4 8.2 14.4 C8.7 11 12.6 9.4 16.6 11.2 Z" fill="#fff"/></svg>
<div class="sep" style="left:596.0px"></div>
<svg class="fav" style="left:612.0px" width="32" height="32" viewBox="0 0 32 32"><circle cx="16" cy="16" r="14.200" fill="#9aa0a6"/><path d="M13 3.5 L19 3.5 L19 6 C19 7.6 17.6 9 16 9 L13 9 L13 12 L9.500 12 L9.500 15.500 L16.500 15.500 C18.2 15.500 19.5 16.800 19.5 18.500 L19.5 22 L21.500 22 C23 22 24.2 23 24.700 24.300 C26.700 22.100 27.900 19.200 27.900 16 C27.900 11 24.800 6.700 20.500 4.900 L20.500 5.500 C20.500 7.400 18.900 9 17 9 Z" fill="#1f2020" opacity="0"/><path d="M19.5 3.600 L19.5 6 C19.5 7.900 17.900 9.500 16 9.500 L13 9.500 L13 12.500 L9.500 12.500 L9.500 16 L17 16 C18.700 16 20 17.300 20 19 L20 22 L21.500 22 C23 22 24.300 23 24.800 24.400 C26.800 22.200 28 19.200 28 16 C28 10.400 24.500 5.500 19.5 3.600 Z" fill="#1f2020"/><path d="M4.400 13 C4.100 14 4 15 4 16 C4 22.100 8.600 27.200 14.500 27.900 L14.500 25 C12.800 25 11.500 23.700 11.500 22 L11.500 20.500 Z" fill="#1f2020"/></svg>
<div class="sep" style="left:656.0px"></div>
<svg class="fav" style="left:672.0px" width="32" height="32" viewBox="0 0 32 32"><path d="M20.5 3.5 L22.5 4.2 L24.2 6 L27 6.4 L30 29.3 L21 31.2 Z" fill="#5e8e3e"/><path d="M4.5 8.2 L8.5 7 C9.5 3.5 11.5 1.2 14.2 1 C15.6 .9 16.6 1.6 17.2 2.6 C18.6 2.4 19.8 2.8 20.5 3.5 L21 31.2 L2 27.6 Z" fill="#95bf47"/><path d="M9.8 6.8 C10.6 4.2 12.2 2.6 14 2.4 M13.4 5.8 C13.8 3.6 15 2.6 16.4 2.9 M16.8 3 C17.6 3.6 17.8 4.6 17.8 5" fill="none" stroke="#5e8e3e" stroke-width="1.1"/><path d="M16.6 11.2 L15.6 14.4 C14.6 13.9 13.6 13.7 12.8 13.9 C11.4 14.2 11.5 15.4 12.4 16 C14 17.1 16.4 18 16.2 21 C16 24.2 13 25.8 10 25 C8.6 24.6 7.6 23.8 7 23 L7.8 20.4 C8.8 21.4 10.2 22.2 11.2 22 C12.4 21.8 12.4 20.6 11.6 20 C9.6 18.6 7.8 17.4 8.2 14.4 C8.7 11 12.6 9.4 16.6 11.2 Z" fill="#fff"/></svg>
<div class="sep" style="left:716.0px"></div>
<svg class="fav" style="left:732.0px" width="32" height="32" viewBox="0 0 32 32"><circle cx="16" cy="16" r="14.200" fill="#9aa0a6"/><path d="M13 3.5 L19 3.5 L19 6 C19 7.6 17.6 9 16 9 L13 9 L13 12 L9.500 12 L9.500 15.500 L16.500 15.500 C18.2 15.500 19.5 16.800 19.5 18.500 L19.5 22 L21.500 22 C23 22 24.2 23 24.700 24.300 C26.700 22.100 27.900 19.200 27.900 16 C27.900 11 24.800 6.700 20.500 4.900 L20.500 5.500 C20.500 7.400 18.900 9 17 9 Z" fill="#1f2020" opacity="0"/><path d="M19.5 3.600 L19.5 6 C19.5 7.900 17.900 9.500 16 9.500 L13 9.500 L13 12.500 L9.500 12.500 L9.500 16 L17 16 C18.700 16 20 17.300 20 19 L20 22 L21.500 22 C23 22 24.300 23 24.800 24.400 C26.800 22.200 28 19.200 28 16 C28 10.400 24.500 5.500 19.5 3.600 Z" fill="#1f2020"/><path d="M4.400 13 C4.100 14 4 15 4 16 C4 22.100 8.600 27.200 14.500 27.900 L14.500 25 C12.800 25 11.500 23.700 11.500 22 L11.500 20.500 Z" fill="#1f2020"/></svg>
<div class="sep" style="left:776.0px"></div>
<svg class="fav" style="left:792.0px" width="32" height="32" viewBox="0 0 32 32"><path d="M20.5 3.5 L22.5 4.2 L24.2 6 L27 6.4 L30 29.3 L21 31.2 Z" fill="#5e8e3e"/><path d="M4.5 8.2 L8.5 7 C9.5 3.5 11.5 1.2 14.2 1 C15.6 .9 16.6 1.6 17.2 2.6 C18.6 2.4 19.8 2.8 20.5 3.5 L21 31.2 L2 27.6 Z" fill="#95bf47"/><path d="M9.8 6.8 C10.6 4.2 12.2 2.6 14 2.4 M13.4 5.8 C13.8 3.6 15 2.6 16.4 2.9 M16.8 3 C17.6 3.6 17.8 4.6 17.8 5" fill="none" stroke="#5e8e3e" stroke-width="1.1"/><path d="M16.6 11.2 L15.6 14.4 C14.6 13.9 13.6 13.7 12.8 13.9 C11.4 14.2 11.5 15.4 12.4 16 C14 17.1 16.4 18 16.2 21 C16 24.2 13 25.8 10 25 C8.6 24.6 7.6 23.8 7 23 L7.8 20.4 C8.8 21.4 10.2 22.2 11.2 22 C12.4 21.8 12.4 20.6 11.6 20 C9.6 18.6 7.8 17.4 8.2 14.4 C8.7 11 12.6 9.4 16.6 11.2 Z" fill="#fff"/></svg>
<div class="sep" style="left:836.0px"></div>
<svg class="fav" style="left:852.0px" width="32" height="32" viewBox="0 0 32 32"><circle cx="16" cy="16" r="14.200" fill="#9aa0a6"/><path d="M13 3.5 L19 3.5 L19 6 C19 7.6 17.6 9 16 9 L13 9 L13 12 L9.500 12 L9.500 15.500 L16.500 15.500 C18.2 15.500 19.5 16.800 19.5 18.500 L19.5 22 L21.500 22 C23 22 24.2 23 24.700 24.300 C26.700 22.100 27.900 19.200 27.900 16 C27.900 11 24.800 6.700 20.500 4.900 L20.500 5.500 C20.500 7.400 18.900 9 17 9 Z" fill="#1f2020" opacity="0"/><path d="M19.5 3.600 L19.5 6 C19.5 7.900 17.900 9.500 16 9.500 L13 9.500 L13 12.500 L9.500 12.500 L9.500 16 L17 16 C18.700 16 20 17.300 20 19 L20 22 L21.500 22 C23 22 24.300 23 24.800 24.400 C26.800 22.200 28 19.200 28 16 C28 10.400 24.500 5.500 19.5 3.600 Z" fill="#1f2020"/><path d="M4.400 13 C4.100 14 4 15 4 16 C4 22.100 8.600 27.200 14.500 27.900 L14.500 25 C12.800 25 11.500 23.700 11.500 22 L11.500 20.500 Z" fill="#1f2020"/></svg>
<div class="sep" style="left:896.0px"></div>
<svg class="fav" style="left:912.0px" width="32" height="32" viewBox="0 0 32 32"><rect width="32" height="32" fill="#6fb4dc"/><rect x="0" y="0" width="32" height="10" fill="#5a9ccc"/><ellipse cx="16.500" cy="17.500" rx="12.500" ry="10" fill="#c8302c"/><ellipse cx="16.500" cy="17" rx="9" ry="7.500" fill="#d9b8a8"/><circle cx="13" cy="15.500" r="1.300" fill="#222"/><circle cx="20" cy="15.500" r="1.300" fill="#222"/><path d="M12.500 19.500 Q16.500 23 20.500 19.500" fill="none" stroke="#7a2a2a" stroke-width="1.200"/><circle cx="4.500" cy="19" r="3" fill="none" stroke="#c8302c" stroke-width="1.600"/><circle cx="28.500" cy="13" r="2.200" fill="none" stroke="#c8302c" stroke-width="1.400"/></svg>
<div class="sep" style="left:956.0px"></div>
<svg class="fav" style="left:972.0px" width="32" height="32" viewBox="0 0 32 32"><circle cx="16" cy="16" r="16" fill="#fff"/><path d="M26.2 16.25c0-.78-.07-1.530-.2-2.250H16v4.260h5.720c-.25 1.330-1 2.450-2.120 3.200v2.660h3.430c2-1.850 3.170-4.570 3.170-7.870z" fill="#4285f4"/><path d="M16 26.5c2.860 0 5.260-.95 7.030-2.580l-3.430-2.660c-.95.640-2.160 1.020-3.600 1.020-2.770 0-5.110-1.870-5.950-4.380H6.510v2.750C8.260 24.130 11.850 26.500 16 26.500z" fill="#34a853"/><path d="M10.050 17.900c-.21-.64-.33-1.320-.33-2.020s.12-1.380.33-2.020v-2.750H6.510C5.780 12.560 5.370 14.200 5.370 15.880s.41 3.320 1.140 4.770l3.540-2.750z" fill="#fbbc05"/><path d="M16 9.480c1.560 0 2.960.54 4.060 1.590l3.040-3.040C21.250 6.310 18.860 5.250 16 5.250c-4.150 0-7.740 2.380-9.490 5.860l3.540 2.750c.84-2.510 3.180-4.380 5.950-4.380z" fill="#ea4335"/></svg>
<div class="sep" style="left:1016.0px"></div>
<svg class="fav" style="left:1032.0px" width="32" height="32" viewBox="0 0 32 32"><rect width="32" height="32" fill="#000"/><path d="M10.500 2 L10.500 14 M14 2 L14 14 M18 2 L18 14 M21.500 2 L21.500 14 M10.500 7 Q12.200 9 14 7 M18 7 Q19.800 9 21.500 7 M12 14 Q16 17 20 14 M10.500 30 L10.500 18 M14 30 L14 18 M18 30 L18 18 M21.500 30 L21.500 18 M10.500 24 Q12.200 22 14 24 M18 24 Q19.800 22 21.500 24 M12 18 Q16 15.500 20 18" fill="none" stroke="#18b394" stroke-width="2.200"/></svg>
<div class="sep" style="left:1076.0px"></div>
<svg class="fav" style="left:1092.0px" width="32" height="32" viewBox="0 0 32 32"><circle cx="16" cy="16" r="16" fill="#fff"/><path d="M26.2 16.25c0-.78-.07-1.530-.2-2.250H16v4.260h5.720c-.25 1.330-1 2.450-2.120 3.200v2.660h3.430c2-1.850 3.170-4.570 3.170-7.870z" fill="#4285f4"/><path d="M16 26.5c2.860 0 5.260-.95 7.030-2.580l-3.430-2.660c-.95.640-2.160 1.020-3.600 1.020-2.770 0-5.110-1.870-5.950-4.380H6.510v2.750C8.260 24.130 11.850 26.500 16 26.500z" fill="#34a853"/><path d="M10.050 17.900c-.21-.64-.33-1.320-.33-2.020s.12-1.380.33-2.020v-2.750H6.510C5.780 12.560 5.370 14.200 5.370 15.880s.41 3.320 1.140 4.770l3.540-2.750z" fill="#fbbc05"/><path d="M16 9.480c1.560 0 2.960.54 4.060 1.590l3.040-3.040C21.250 6.310 18.860 5.250 16 5.250c-4.150 0-7.740 2.380-9.490 5.860l3.540 2.750c.84-2.510 3.180-4.380 5.950-4.380z" fill="#ea4335"/></svg>
<div class="sep" style="left:1136.0px"></div>
<svg class="fav" style="left:1152.0px" width="32" height="32" viewBox="0 0 32 32"><circle cx="16" cy="16" r="14.200" fill="#9aa0a6"/><path d="M13 3.5 L19 3.5 L19 6 C19 7.6 17.6 9 16 9 L13 9 L13 12 L9.500 12 L9.500 15.500 L16.500 15.500 C18.2 15.500 19.5 16.800 19.5 18.500 L19.5 22 L21.500 22 C23 22 24.2 23 24.700 24.300 C26.700 22.100 27.900 19.200 27.900 16 C27.900 11 24.800 6.700 20.500 4.900 L20.500 5.500 C20.500 7.400 18.900 9 17 9 Z" fill="#1f2020" opacity="0"/><path d="M19.5 3.600 L19.5 6 C19.5 7.900 17.900 9.500 16 9.500 L13 9.500 L13 12.500 L9.500 12.500 L9.500 16 L17 16 C18.700 16 20 17.300 20 19 L20 22 L21.500 22 C23 22 24.300 23 24.800 24.400 C26.800 22.200 28 19.200 28 16 C28 10.400 24.500 5.500 19.5 3.600 Z" fill="#1f2020"/><path d="M4.400 13 C4.100 14 4 15 4 16 C4 22.100 8.600 27.200 14.500 27.900 L14.500 25 C12.800 25 11.500 23.700 11.500 22 L11.500 20.500 Z" fill="#1f2020"/></svg>
<div class="sep" style="left:1196.3px"></div>
<svg class="fav" style="left:1212.6px" width="32" height="32" viewBox="0 0 32 32"><ellipse cx="16" cy="20" rx="11" ry="10.500" fill="#cf2a27"/><rect x="10" y="15" width="12" height="12" fill="#26307a"/><path d="M10 15 L22 27 M22 15 L10 27" stroke="#fff" stroke-width="2.400"/><path d="M10 15 L22 27 M22 15 L10 27" stroke="#cf2a27" stroke-width="1"/><path d="M16 15 L16 27 M10 21 L22 21" stroke="#fff" stroke-width="3.400"/><path d="M16 15 L16 27 M10 21 L22 21" stroke="#cf2a27" stroke-width="1.800"/><circle cx="16" cy="9.500" r="4.200" fill="#f0d8c8"/><rect x="9.500" y="4.500" width="13" height="1.800" fill="#111"/><rect x="12" y="0.500" width="8" height="4.500" rx="1" fill="#111"/></svg>
<div class="sep" style="left:1256.0px"></div>
<svg class="fav" style="left:1271.4px" width="32" height="32" viewBox="0 0 32 32"><circle cx="13.5" cy="13.5" r="6.800" fill="none" stroke="#1a73e8" stroke-width="3.200"/><path d="M18.600 18.600 L25.500 25.500" stroke="#1a73e8" stroke-width="3.400" stroke-linecap="round"/></svg>
<div class="sep" style="left:1314.7px"></div>
<svg class="fav" style="left:1330.0px" width="32" height="32" viewBox="0 0 32 32"><rect x="1" y="4" width="30" height="6" fill="#8a6420"/><rect x="1" y="13" width="30" height="6" fill="#8a6420"/><rect x="1" y="22" width="30" height="6" fill="#8a6420"/><rect x="6" y="0" width="3.500" height="32" fill="#000"/><rect x="22.500" y="0" width="3.500" height="32" fill="#000"/></svg>
<div class="sep" style="left:1373.0px"></div>
<svg class="fav" style="left:1388.0px" width="32" height="32" viewBox="0 0 32 32"><rect width="32" height="32" fill="#fff"/><path d="M3 25 L29 15" stroke="#888" stroke-width="3" opacity=".55"/><g transform="translate(16 17) rotate(-10) skewX(-18)"><text x="0" y="6" font-family="Liberation Serif" font-weight="bold" font-size="21" text-anchor="middle" fill="#000">Al&#39;s</text></g></svg>
<div class="sep" style="left:1430.9px"></div>
<svg class="fav" style="left:1445.8px" width="32" height="32" viewBox="0 0 32 32"><circle cx="13.5" cy="13.5" r="6.800" fill="none" stroke="#1a73e8" stroke-width="3.200"/><path d="M18.600 18.600 L25.500 25.500" stroke="#1a73e8" stroke-width="3.400" stroke-linecap="round"/></svg>
<div class="sep" style="left:1488.8px"></div>
<svg class="fav" style="left:1503.8px" width="32" height="32" viewBox="0 0 32 32"><rect width="32" height="32" fill="#fff"/><path d="M3 22 L9 22 L11 18.500 L18 18.500 L20 14 L26 14 L27 16 L30 16.500 L26.500 18 L21 20.500 L13 21.500 L12 24 L3 24 Z" fill="#333"/><rect x="20" y="12.500" width="6" height="3" fill="#e8641e"/><rect x="9" y="16" width="8" height="2" fill="#555"/></svg>
<div class="sep" style="left:1546.8px"></div>
<svg class="fav" style="left:1561.7px" width="32" height="32" viewBox="0 0 32 32"><path d="M2 9 L2 25 Q2 27 4 27 L8 27 L8 14.500 Z" fill="#4285f4"/><path d="M30 9 L30 25 Q30 27 28 27 L24 27 L24 14.500 Z" fill="#34a853"/><path d="M8 14.500 L8 7.500 L16 13.800 L24 7.500 L24 14.500 L16 20.800 Z" fill="#ea4335"/><path d="M2 9 Q2 5.500 5.200 5.600 Q6.500 5.800 8 7.500 L8 14.500 L2 10 Z" fill="#c5221f"/><path d="M30 9 Q30 5.500 26.800 5.600 Q25.500 5.800 24 7.500 L24 14.500 L30 10 Z" fill="#fbbc04"/></svg>
<div class="sep" style="left:1604.8px"></div>
<svg class="fav" style="left:1619.9px" width="32" height="32" viewBox="0 0 32 32"><circle cx="13.5" cy="13.5" r="6.800" fill="none" stroke="#1a73e8" stroke-width="3.200"/><path d="M18.600 18.600 L25.500 25.500" stroke="#1a73e8" stroke-width="3.400" stroke-linecap="round"/></svg>
<div class="sep" style="left:1662.9px"></div>
<svg class="fav" style="left:1677.9px" width="32" height="32" viewBox="0 0 32 32"><circle cx="13.5" cy="13.5" r="6.800" fill="none" stroke="#1a73e8" stroke-width="3.200"/><path d="M18.600 18.600 L25.500 25.500" stroke="#1a73e8" stroke-width="3.400" stroke-linecap="round"/></svg>
<div class="sep" style="left:1721.0px"></div>
<svg class="fav" style="left:1736.0px" width="32" height="32" viewBox="0 0 32 32"><path d="M9 9 L9 6 Q9 1.500 16 1.500 Q23 1.500 23 6 L23 9" fill="none" stroke="#000" stroke-width="2.400"/><rect x="0" y="8" width="32" height="3" fill="#000"/><rect x="0" y="25" width="32" height="7" fill="#000"/><rect x="0" y="11" width="8" height="15" fill="#e23237"/><rect x="8" y="11" width="8" height="15" fill="#0b6bd8"/><rect x="16" y="11" width="8" height="15" fill="#f7b500"/><rect x="24" y="11" width="8" height="15" fill="#78b828"/></svg>
<svg style="left:1762px;top:12px" width="112" height="68" viewBox="0 0 112 68"><path d="M0 68 C14 68 24 62 24 46 L24 22 Q24 0 46 0 L66 0 Q88 0 88 22 L88 46 C88 62 98 68 112 68 Z" fill="#3c3c3c"/><path d="M47.700 19.700 L64.300 36.300 M64.300 19.700 L47.700 36.300" stroke="#e3e3e3" stroke-width="2.900" stroke-linecap="butt"/></svg>
<svg class="fav" style="left:1870.0px" width="32" height="32" viewBox="0 0 32 32"><rect width="32" height="32" fill="#fff"/><path d="M2 9 L13 9 L13 22 L2 22 Z" fill="#1d5fc4"/><path d="M2 13 L13 22 M2 17 L9 22 M5 9 L13 16 M9 9 L13 12.500" stroke="#fff" stroke-width="1.300"/><rect x="16" y="10" width="10" height="2" fill="#444"/><rect x="16" y="14.500" width="13" height="2" fill="#444"/><rect x="16" y="19" width="9" height="2" fill="#444"/></svg>
<div class="sep" style="left:1913.1px"></div>
<svg class="fav" style="left:1928.2px" width="32" height="32" viewBox="0 0 32 32"><circle cx="13.5" cy="13.5" r="6.800" fill="none" stroke="#1a73e8" stroke-width="3.200"/><path d="M18.600 18.600 L25.500 25.500" stroke="#1a73e8" stroke-width="3.400" stroke-linecap="round"/></svg>
<div class="sep" style="left:1971.1px"></div>
<svg class="fav" style="left:1986.0px" width="32" height="32" viewBox="0 0 32 32"><rect x="0" y="0" width="32" height="32" rx="7" fill="#fff"/><text x="16" y="20.5" font-family="Liberation Sans" font-weight="bold" font-size="29" text-anchor="middle" fill="#111">a</text><path d="M5 23.500 C11 28.200 20 28.400 26 24.200" fill="none" stroke="#ff9900" stroke-width="2.200" stroke-linecap="round"/><path d="M23.500 22.800 L27.200 23 L25.800 26.500" fill="none" stroke="#ff9900" stroke-width="1.800" stroke-linecap="round" stroke-linejoin="round"/></svg>
<div class="sep" style="left:2029.0px"></div>
<svg class="fav" style="left:2044.0px" width="32" height="32" viewBox="0 0 32 32"><rect x="0" y="0" width="32" height="32" rx="7" fill="#fff"/><text x="16" y="20.5" font-family="Liberation Sans" font-weight="bold" font-size="29" text-anchor="middle" fill="#111">a</text><path d="M5 23.500 C11 28.200 20 28.400 26 24.200" fill="none" stroke="#ff9900" stroke-width="2.200" stroke-linecap="round"/><path d="M23.500 22.800 L27.200 23 L25.800 26.500" fill="none" stroke="#ff9900" stroke-width="1.800" stroke-linecap="round" stroke-linejoin="round"/></svg>
<div class="sep" style="left:2087.0px"></div>
<svg class="fav" style="left:2102.0px" width="32" height="32" viewBox="0 0 32 32"><circle cx="16" cy="16" r="14.200" fill="#9aa0a6"/><path d="M13 3.5 L19 3.5 L19 6 C19 7.6 17.6 9 16 9 L13 9 L13 12 L9.500 12 L9.500 15.500 L16.500 15.500 C18.2 15.500 19.5 16.800 19.5 18.500 L19.5 22 L21.500 22 C23 22 24.2 23 24.700 24.300 C26.700 22.100 27.900 19.200 27.900 16 C27.900 11 24.800 6.700 20.500 4.900 L20.500 5.500 C20.500 7.400 18.900 9 17 9 Z" fill="#1f2020" opacity="0"/><path d="M19.5 3.600 L19.5 6 C19.5 7.900 17.900 9.500 16 9.500 L13 9.500 L13 12.500 L9.500 12.500 L9.500 16 L17 16 C18.700 16 20 17.300 20 19 L20 22 L21.500 22 C23 22 24.300 23 24.800 24.400 C26.800 22.200 28 19.200 28 16 C28 10.400 24.500 5.500 19.5 3.600 Z" fill="#1f2020"/><path d="M4.400 13 C4.100 14 4 15 4 16 C4 22.100 8.600 27.200 14.500 27.900 L14.500 25 C12.800 25 11.500 23.700 11.500 22 L11.500 20.500 Z" fill="#1f2020"/></svg>
<div class="sep" style="left:2145.0px"></div>
<svg class="fav" style="left:2160.0px" width="32" height="32" viewBox="0 0 32 32"><rect width="32" height="32" fill="#fff"/><circle cx="16" cy="16" r="15.500" fill="#e4002b"/><path d="M11 24.500 L11 8.500 C14 6.500 20 6.500 20.800 10 C21.300 12.500 19.500 14.200 16.500 15 C21 15 23.200 17.800 22.200 21 C21 24.800 15 25.800 11 24.500 M16.500 15 C14.500 15.200 13.800 17.500 15.200 18.800 C16.800 20 18.500 18.500 17.600 17.200" fill="none" stroke="#ffd400" stroke-width="2.500" stroke-linecap="round" stroke-linejoin="round"/></svg>
<div class="sep" style="left:2203.0px"></div>
<svg class="fav" style="left:2218.0px" width="32" height="32" viewBox="0 0 32 32"><rect width="32" height="32" fill="#fff"/><circle cx="16" cy="16" r="15.500" fill="#e4002b"/><path d="M11 24.500 L11 8.500 C14 6.500 20 6.500 20.800 10 C21.300 12.500 19.500 14.200 16.500 15 C21 15 23.200 17.800 22.200 21 C21 24.800 15 25.800 11 24.500 M16.500 15 C14.500 15.200 13.800 17.500 15.200 18.800 C16.800 20 18.500 18.500 17.600 17.200" fill="none" stroke="#ffd400" stroke-width="2.500" stroke-linecap="round" stroke-linejoin="round"/></svg>
<div class="sep" style="left:2260.0px"></div>
<svg style="left:2283px;top:27px" width="26" height="26" viewBox="0 0 26 26"><path d="M13 3.500 V22.500 M3.500 13 H22.500" stroke="#dcdcdc" stroke-width="2.900"/></svg>
<div class="a" style="left:2432px;top:12px;width:57px;height:56px;border-radius:18px;background:#393a3a"></div>
<svg style="left:2448px;top:33px" width="24" height="14" viewBox="0 0 24 14"><path d="M4.500 3.500 L12 10.500 L19.500 3.500" fill="none" stroke="#e3e3e3" stroke-width="3.200"/></svg>
<div id="tool">
<!-- toolbar origin = page (92,156) -->
<svg style="left:32px;top:34px" width="24" height="24" viewBox="0 0 24 24"><path d="M23.500 12 H2.500 M12 1.500 L1.800 12 L12 22.500" fill="none" stroke="#c7c7c7" stroke-width="2.900"/></svg>
<svg style="left:104px;top:34px" width="24" height="24" viewBox="0 0 24 24"><path d="M0.500 12 H21.500 M12 1.500 L22.200 12 L12 22.500" fill="none" stroke="#7f7f7f" stroke-width="2.900"/></svg>
<svg style="left:175px;top:33px" width="26" height="26" viewBox="0 0 26 26"><path d="M22.800 15.500 A10.300 10.300 0 1 1 19.800 5.300" fill="none" stroke="#c7c7c7" stroke-width="2.900"/><path d="M23.300 1.800 V9.800 H15.300" fill="none" stroke="#c7c7c7" stroke-width="2.900"/></svg>
<svg style="left:247px;top:31px" width="26" height="30" viewBox="0 0 26 30"><path d="M2 28 V11.500 L13 2.500 L24 11.500 V28 H16.500 V17.500 H9.500 V28 Z" fill="none" stroke="#c7c7c7" stroke-width="2.900" stroke-linejoin="miter"/></svg>
<!-- omnibox -->
<div class="a" style="left:311px;top:12px;width:1404px;height:68px;border-radius:34px;background:#282828"></div>
<div class="a" style="left:322px;top:22px;width:48px;height:48px;border-radius:24px;background:#3d3d3d"></div>
<svg style="left:333px;top:34px" width="26" height="24" viewBox="0 0 26 24"><g fill="none" stroke="#e3e3e3" stroke-width="2.800"><circle cx="5.800" cy="5.800" r="3.800"/><path d="M13 5.800 H25"/><circle cx="20.200" cy="18.200" r="3.800"/><path d="M1 18.200 H13"/></g></svg>
<div id="url" class="a" style="left:387px;top:26px;font-size:29px;line-height:40px;color:#e3e3e3;letter-spacing:0.740px">uk.airfix.com<span style="color:#c7c7c7">/products/lwb-land-rover-hard-top-and-trailer-a02324?_br_psugg_q=a02324...</span></div>
<svg style="left:1652px;top:31px" width="30" height="29" viewBox="0 0 30 29"><path d="M15 3.200 L18.400 11.300 L27.100 12 L20.500 17.700 L22.500 26.200 L15 21.700 L7.500 26.200 L9.500 17.700 L2.900 12 L11.600 11.300 Z" fill="none" stroke="#c7c7c7" stroke-width="2.700" stroke-linejoin="miter"/></svg>
<!-- puzzle -->
<svg style="left:1751px;top:30px" width="32" height="32" viewBox="0 0 32 32"><path d="M3 9 H10 V7.500 A3.500 3.500 0 0 1 17 7.500 V9 H24.500 V15 H26 A3.500 3.500 0 0 1 26 22 H24.500 V29.500 H3 Z" fill="none" stroke="#c7c7c7" stroke-width="2.900" stroke-linejoin="round"/></svg>
<div class="a" style="left:1818px;top:30px;width:4px;height:31px;border-radius:2px;background:#5c5c5c"></div>
<!-- trash -->
<svg style="left:1860px;top:31px" width="28" height="30" viewBox="0 0 28 30"><path d="M1.500 5.500 H26.500 M9.500 5 V1.800 H18.500 V5" fill="none" stroke="#c7c7c7" stroke-width="2.900"/><path d="M4.800 5.500 V28 H23.200 V5.500" fill="none" stroke="#c7c7c7" stroke-width="2.900"/><path d="M10.800 10.500 V23 M17.200 10.500 V23" stroke="#c7c7c7" stroke-width="2.700"/></svg>
<!-- card -->
<svg style="left:1929px;top:34px" width="34" height="25" viewBox="0 0 34 25"><rect x="1.500" y="1.500" width="31" height="22" rx="3" fill="none" stroke="#c7c7c7" stroke-width="2.900"/><rect x="1.500" y="6.500" width="31" height="5.500" fill="#c7c7c7"/></svg>
<!-- star sparkle -->
<svg style="left:2000px;top:29px" width="36" height="32" viewBox="0 0 36 32"><path d="M15 7.500 L17.900 14.400 L25.300 15 L19.700 19.800 L21.400 27 L15 23.200 L8.600 27 L10.300 19.800 L4.700 15 L12.100 14.400 Z" fill="none" stroke="#c7c7c7" stroke-width="2.600" stroke-linejoin="miter"/><path d="M20.500 1 L22 6.500 L26 9.500 M29 12 L34 14.500 L29.500 17.500 M27 21 L31 25" fill="none" stroke="#c7c7c7" stroke-width="2.400"/></svg>
<div class="a" style="left:2070px;top:30px;width:4px;height:31px;border-radius:2px;background:#5c5c5c"></div>
<!-- avatar -->
<div class="a" style="left:2106px;top:26px;width:40px;height:40px;border-radius:20px;background:#7b1fa2;text-align:center;font-size:22px;line-height:41px;color:#fff">M</div>
<!-- relaunch -->
<div class="a" style="left:2170px;top:12px;width:319px;height:68px;border-radius:34px;background:#004a77"></div>
<div id="relaunch" class="a" style="left:2194px;top:26px;font-size:27px;line-height:40px;color:#c2e7ff;letter-spacing:0.080px;-webkit-text-stroke:0.300px #c2e7ff">Relaunch to update</div>
<svg style="left:2451px;top:32px" width="10" height="30" viewBox="0 0 10 30"><circle cx="5" cy="4.500" r="3.200" fill="#c2e7ff"/><circle cx="5" cy="14.800" r="3.200" fill="#c2e7ff"/><circle cx="5" cy="25" r="3.200" fill="#c2e7ff"/></svg>
<!-- bookmarks bar -->
<svg style="left:25px;top:105px" width="30" height="30" viewBox="0 0 30 30"><g fill="none" stroke="#c7c7c7" stroke-width="2.900"><rect x="2" y="2" width="9.500" height="9.500"/><rect x="18.500" y="2" width="9.500" height="9.500"/><rect x="2" y="18.500" width="9.500" height="9.500"/><rect x="18.500" y="18.500" width="9.500" height="9.500"/></g></svg>
<div class="a" style="left:84px;top:104px;width:4px;height:32px;border-radius:2px;background:#5f5f5f"></div>
<svg style="left:117px;top:108px" width="30" height="23" viewBox="0 0 30 23"><path d="M0 4 L0 20.500 Q0 22.500 2 22.500 L6.500 22.500 L6.500 9.500 Z" fill="#4285f4"/><path d="M30 4 L30 20.500 Q30 22.500 28 22.500 L23.500 22.500 L23.500 9.500 Z" fill="#34a853"/><path d="M6.500 9.500 L6.500 2.200 L15 8.800 L23.500 2.200 L23.500 9.500 L15 16.200 Z" fill="#ea4335"/><path d="M0 4 Q0 .5 3.200 .5 Q5 .7 6.500 2.200 L6.500 9.500 L0 4.600 Z" fill="#c5221f"/><path d="M30 4 Q30 .5 26.800 .5 Q25 .7 23.500 2.200 L23.500 9.500 L30 4.600 Z" fill="#fbbc04"/></svg>
<div id="inbox" class="a" style="left:161px;top:100px;font-size:24.800px;line-height:40px;color:#dfdfdf;letter-spacing:0.200px">Inbox - martynfen...</div>
<div class="a" style="left:2226px;top:104px;width:4px;height:32px;border-radius:2px;background:#5f5f5f"></div>
<svg style="left:2262px;top:108px" width="32" height="25" viewBox="0 0 32 25"><path d="M1.500 3.500 Q1.500 1.500 3.500 1.500 L11.500 1.500 L14.500 5 L28.500 5 Q30.500 5 30.500 7 L30.500 21.500 Q30.500 23.500 28.500 23.500 L3.500 23.500 Q1.500 23.500 1.500 21.500 Z" fill="none" stroke="#c7c7c7" stroke-width="2.700"/></svg>
<div id="allbm" class="a" style="left:2311px;top:100px;font-size:24.800px;line-height:40px;color:#dfdfdf;letter-spacing:0px">All Bookmarks</div>

</div>
<div id="page">
<svg style="left:0;top:0" width="2500" height="1455" viewBox="92 320 2500 1455">
<defs>
<filter id="b3" x="-50%" y="-50%" width="200%" height="200%"><feGaussianBlur stdDeviation="3"/></filter>
<filter id="b6" x="-100%" y="-300%" width="300%" height="700%"><feGaussianBlur stdDeviation="6"/></filter>
<filter id="b12" x="-100%" y="-300%" width="300%" height="700%"><feGaussianBlur stdDeviation="12"/></filter>
<filter id="b25" x="-100%" y="-300%" width="300%" height="700%"><feGaussianBlur stdDeviation="25"/></filter>
<radialGradient id="tg" cx="35%" cy="40%" r="75%"><stop offset="0" stop-color="#565c5b"/><stop offset=".6" stop-color="#3d4342"/><stop offset="1" stop-color="#262a29"/></radialGradient>
<linearGradient id="shv" x1="0" y1="0" x2="0" y2="1"><stop offset="0" stop-color="#fff" stop-opacity=".07"/><stop offset=".45" stop-color="#fff" stop-opacity="0"/><stop offset="1" stop-color="#000" stop-opacity=".16"/></linearGradient>
<linearGradient id="shh" x1="0" y1="0" x2="1" y2="0"><stop offset="0" stop-color="#000" stop-opacity=".10"/><stop offset=".25" stop-color="#000" stop-opacity="0"/><stop offset="1" stop-color="#000" stop-opacity=".08"/></linearGradient>
<linearGradient id="ubg" gradientUnits="userSpaceOnUse" x1="1100" y1="1040" x2="1085" y2="1125"><stop offset="0" stop-color="#000" stop-opacity=".5"/><stop offset=".5" stop-color="#000" stop-opacity=".25"/><stop offset="1" stop-color="#000" stop-opacity="0"/></linearGradient>
<g id="wheel"><!-- unit wheel: rx=1 ry=1 centred 0,0 -->
<ellipse cx="0.060" cy="0" rx="0.960" ry="1" fill="#242827"/>
<ellipse cx="0" cy="0" rx="0.940" ry="1" fill="url(#tg)"/>
<ellipse cx="-0.020" cy="0" rx="0.800" ry="0.860" fill="none" stroke="#2a2e2d" stroke-width="0.160" stroke-dasharray="0.1 0.13" opacity=".55"/>
<ellipse cx="-0.120" cy="0" rx="0.560" ry="0.620" fill="#2f3533"/>
<ellipse cx="-0.140" cy="0" rx="0.500" ry="0.560" class="c6"/>
<ellipse cx="-0.150" cy="0" rx="0.260" ry="0.300" class="c4"/>
<ellipse cx="-0.160" cy="0" rx="0.120" ry="0.140" class="c6"/>
</g>
<g id="trailer">
<path d="M540 1000 L800 1008 L830 1040 L640 1045 Z" fill="#909090" opacity=".4" filter="url(#b25)"/>
<ellipse cx="740" cy="1008" rx="38" ry="20" fill="#555" class="blob" filter="url(#b6)"/>
<ellipse cx="640" cy="1016" rx="85" ry="14" fill="#777" opacity=".5" filter="url(#b12)"/>
<!-- ===== trailer ===== -->
<ellipse cx="742" cy="957" rx="37" ry="30" fill="#1c201f"/>
<path d="M700 938 L820 919 L820 933 L700 960 Z" class="c3"/>
<path d="M524 866 L698 888 L698 960 L655 954 L600 940 L521 926 Z" class="c3"/>
<path d="M530 872 L578 879 L578 926 L530 916 Z" class="c1"/>
<path d="M578 881 L655 892 L655 950 L578 934 Z" fill="#222725"/>
<path d="M521 916 L580 928 L580 938 L521 927 Z" class="c1"/>
<path d="M524 888 L537 890 L556 948 L528 950 Z" class="c4"/>
<path d="M655 897 L698 903 L698 960 L655 952 Z" class="c1"/>
<path d="M655 897 L698 903 L698 960 L655 952 Z" class="camo"/>
<path d="M698 888 L820 856 L820 925 L722 936 L698 960 Z" class="c3"/>
<path d="M698 888 L727 881 L724 940 L698 960 Z" class="camo"/>
<path d="M655 938 L698 944 L722 936 L722 948 L698 960 L655 952 Z" class="c1"/>
<path d="M770 926 L792 866 L801 868 L780 930 Z" class="c1"/>
<path d="M783 864 L795 858 L803 866 L792 872 Z" class="c4"/>
<path d="M524 858 L698 879 L820 848 L820 857 L698 888 L524 867 Z" class="c1"/>
<path d="M524 852 Q525 848 532 847 L653 821 L820 843 L820 849 L698 880 L524 859 Z" class="c5"/>
<use href="#wheel" transform="translate(631 966.500) scale(42 49)"/>
</g>
<g id="rover">
<!-- ground shadows -->
<path d="M560 1000 L800 1010 L1000 1040 L1300 1120 L1520 1110 L1560 1150 L1300 1185 L900 1110 L640 1040 Z" fill="#8f8f8f" opacity=".38" filter="url(#b25)"/>
<path d="M1000 1040 L1225 1062 L1345 1100 L1440 1090 L1500 1125 L1290 1160 L1060 1118 L965 1082 Z" fill="#6f6f6f" opacity=".55" filter="url(#b12)"/>
<path d="M1000 1030 L1230 1058 L1246 1140 L1170 1130 L975 1082 Z" fill="url(#ubg)" filter="url(#b3)"/><ellipse cx="1069" cy="1066" rx="40" ry="32" fill="#222" class="blob" filter="url(#b3)"/>
<path d="M1350 1100 L1440 1088 L1478 1112 L1372 1136 Z" fill="#3a3a3a" opacity=".7" filter="url(#b6)"/>
<path d="M1368 1130 L1468 1110 L1474 1116 L1372 1138 Z" fill="#222" opacity=".6" filter="url(#b3)"/>
<ellipse cx="960" cy="1082" rx="70" ry="12" fill="#666" opacity=".5" filter="url(#b6)"/>
<ellipse cx="1290" cy="1138" rx="70" ry="10" fill="#555" opacity=".5" filter="url(#b6)"/>
<!-- ===== rover ===== -->
<ellipse cx="1414" cy="1070" rx="27" ry="26" fill="#1b1e1d"/>
<path d="M865 1009 L900 1000" stroke="#3a2c20" stroke-width="6" stroke-linecap="round"/>
<ellipse cx="948" cy="1000" rx="52" ry="40" fill="#1c201e"/><ellipse cx="1270" cy="1052" rx="60" ry="42" fill="#1c201e"/>
<!-- body side -->
<path d="M814 808 Q815 788 832 781 L1072 829 L1163 860 L1167 868 L1193 934 L1190 958 L1355 973 L1373 1001 L1375 1041 L1346 1060 L1332 1058 Q1316 1014 1268 1012 Q1226 1016 1212 1051 L1220 1058 L1004 1031 L1004 1008 Q990 960 946 957 Q900 958 883 990 L819 993 L798 989 L798 972 L814 968 Z" class="c1"/>
<!-- lower body slightly darker -->
<path d="M814 898 L1065 930 L1174 939 L1190 958 L1355 973 L1373 1001 L1375 1041 L1346 1060 L1332 1058 Q1316 1014 1268 1012 Q1226 1016 1212 1051 L1220 1058 L1004 1031 L1004 1008 Q990 960 946 957 Q900 958 883 990 L819 993 L798 989 L798 972 L814 968 Z" class="c3"/>
<path d="M1340 992 L1358 974 L1374 1000 L1376 1048 L1346 1062 Z" class="c4" opacity=".6"/>
<!-- wheel arches inner dark -->
<path d="M883 990 Q900 958 946 957 Q990 960 1004 1008 L1004 1031 L985 1030 Q980 975 944 972 Q905 974 898 1002 Z" fill="#262b28"/>
<path d="M1212 1051 Q1226 1016 1268 1012 Q1316 1014 1332 1058 L1322 1064 Q1308 1030 1268 1028 Q1236 1030 1226 1058 Z" fill="#262b28"/>
<!-- camo on side -->
<g class="camo">
<path d="M816 806 L850 784 L862 817 L870 848 L884 893 L893 920 L899 944 L913 956 L891 971 L884 990 L868 990 L864 926 L866 904 L853 889 L842 860 L826 835 L816 818 Z"/>
<path d="M911 806 L931 792 L958 799 L962 824 L969 857 L973 880 L991 904 L1007 926 L1014 947 L1016 971 L1031 993 L1048 1034 L1006 1030 L998 1010 L989 971 L971 944 L967 918 L949 898 L940 875 L935 846 L917 828 Z"/>
<path d="M1014 817 L1033 802 L1072 808 L1072 831 L1067 864 L1065 929 L1109 935 L1125 949 L1134 964 L1152 993 L1182 1030 L1204 1052 L1141 1045 L1132 1018 L1098 993 L1098 965 L1069 947 L1051 929 L1040 911 L1040 875 L1022 842 Z"/>
<path d="M1233 980 L1277 985 L1313 1001 L1331 1027 L1322 1040 Q1300 1012 1268 1012 Q1230 1016 1212 1050 L1204 1027 L1222 1001 Z"/>
<path d="M1237 969 L1284 973 L1290 979 L1240 976 Z"/>
</g>
<path d="M814 808 Q815 788 832 781 L1072 829 L1163 860 L1167 868 L1193 934 L1190 958 L1355 973 L1373 1001 L1375 1041 L1346 1060 L1332 1058 Q1316 1014 1268 1012 Q1226 1016 1212 1051 L1220 1058 L1004 1031 L1004 1008 Q990 960 946 957 Q900 958 883 990 L819 993 L798 989 L798 972 L814 968 Z" fill="url(#shv)"/><path d="M814 808 Q815 788 832 781 L1072 829 L1163 860 L1167 868 L1193 934 L1190 958 L1355 973 L1373 1001 L1375 1041 L1346 1060 L1332 1058 Q1316 1014 1268 1012 Q1226 1016 1212 1051 L1220 1058 L1004 1031 L1004 1008 Q990 960 946 957 Q900 958 883 990 L819 993 L798 989 L798 972 L814 968 Z" fill="url(#shh)"/>
<path d="M814 897 L1065 929 L1174 938" class="ln" opacity=".8"/>
<path d="M814 893 L1065 925" fill="none" stroke="#6d8560" stroke-width="2" opacity=".5"/>
<path d="M1067 858 L1066 1038 M1180 942 L1186 1052" class="ln" opacity=".7"/>
<!-- side window -->
<path d="M1078 871 L1158 880 L1174 936 L1081 926 Z" class="win"/>
<path d="M1130 877 L1136 932" stroke="#2f3434" stroke-width="2.500"/>
<!-- roof -->
<path d="M826 784 Q838 776 852 773 L935 753 L1188 782 L1280 805 L1293 827 L1163 861 L1072 830 Z" class="c2"/>
<path d="M1072 821 L1196 841 L1288 816 L1293 827 L1163 861 L1072 830 Z" class="c5"/>
<g class="camo">
<path d="M850 774 L891 764 L931 754 L953 755 L917 766 L868 783 L850 784 Z"/>
<path d="M931 792 L989 775 L1031 766 L1072 768 L1025 783 L958 799 Z"/>
<path d="M1033 802 L1091 786 L1134 781 L1190 784 L1190 792 L1134 795 L1072 808 Z"/>
</g>
<path d="M868 769 L1236 818 M893 763 L1258 811 M918 757 L1276 805" fill="none" stroke="#3d4d37" stroke-width="2.500" opacity=".75"/>
<path d="M870 766 L1238 815 M895 760 L1260 808" fill="none" stroke="#7a9269" stroke-width="1.500" opacity=".6"/>
<!-- windscreen frame -->
<path d="M1163 861 L1293 827 L1297 838 L1320 893 L1193 934 L1166 868 Z" class="c3"/>
<path d="M1183 876 L1231 861 L1246 910 L1198 921 Z" fill="#14171c"/>
<path d="M1219 866 L1231 862 L1237 881 L1226 878 Z" fill="#c5cad0"/>
<path d="M1246 856 L1289 841.500 L1302 885 L1259 899 Z" fill="#c3c8cd"/>
<path d="M1254 884 L1299 874 L1302 885 L1259 899 Z" fill="#1b1e24"/>
<path d="M1266 852 L1270 888" stroke="#8a8f94" stroke-width="1.500"/>
<!-- scuttle & bonnet -->
<path d="M1193 934 L1320 893 L1324 908 L1262 930 L1200 962 L1190 958 Z" class="c4"/>
<path d="M1189 960 L1262 926 L1322 901 L1418 941 L1367 979 L1355 976 Z" class="c6"/>
<path class="camo" d="M1244 960 L1266 945 L1328 947 L1313 960 L1277 964 Z"/>
<!-- spare wheel -->
<path d="M1262 918 L1262 932 A58 21 0 0 0 1378 932 L1378 918 Z" fill="#1d201f"/>
<ellipse cx="1320" cy="918.500" rx="58" ry="21" fill="#434948"/>
<ellipse cx="1320" cy="918.500" rx="58" ry="21" fill="none" stroke="#2b2f2e" stroke-width="3"/>
<ellipse cx="1320" cy="914" rx="33" ry="10.500" fill="#2a2f2d"/>
<ellipse cx="1319" cy="913" rx="27" ry="8" class="c3"/>
<!-- front -->
<path d="M1355 973 L1418 941 L1420 1020 L1376 1048 L1374 1001 Z" class="c4"/>
<path d="M1366 975 L1415 956 L1417 1014 L1376 1031 Z" fill="#222725"/>
<path d="M1369 990 L1415 972 M1371 1004 L1415 987 M1373 1017 L1416 1001 M1378 972 L1382 1024 M1390 967 L1394 1020 M1402 963 L1406 1015" stroke="#3a403c" stroke-width="1.200" fill="none"/>
<path d="M1418 941.600 L1440 932 Q1466 930 1471 952 L1470 1004 L1420 1024 Z" class="c6"/>
<path d="M1418 941.600 L1440 932 Q1462 931 1468 946 L1430 958 Z" class="c3" opacity=".8"/>
<g class="pr"><circle cx="1456" cy="957" r="5.500" fill="#e8e8f0"/><circle cx="1456" cy="957" r="4" fill="#27408b"/><circle cx="1456" cy="957" r="1.800" fill="#c8302c"/></g><g class="pl" transform="translate(1456 957) rotate(-18)"><rect x="-7" y="-4.500" width="14" height="9" fill="#2b3a78"/><path d="M-7 -4.500 L7 4.500 M7 -4.500 L-7 4.500" stroke="#e8e4e4" stroke-width="2.200"/><path d="M-7 -4.500 L7 4.500 M7 -4.500 L-7 4.500" stroke="#c8302c" stroke-width=".9"/><path d="M0 -4.500 V4.500 M-7 0 H7" stroke="#e8e4e4" stroke-width="3.200"/><path d="M0 -4.500 V4.500 M-7 0 H7" stroke="#c8302c" stroke-width="1.700"/></g>
<circle cx="1456" cy="985" r="6.500" fill="#d4d8d8"/><circle cx="1454" cy="983" r="2.500" fill="#fff"/>
<circle cx="1367" cy="1025" r="6.500" fill="#d4d8d8"/><circle cx="1365" cy="1023" r="2.500" fill="#fff"/><circle cx="1356" cy="1022" r="4" fill="#a8acac"/>
<!-- bumper -->
<path d="M1346 1062 L1489 1006 L1489 1034 L1346 1097 Z" class="c6"/>
<path d="M1346 1052 L1483 998 L1489 1006 L1346 1062 Z" class="c1"/>
<path d="M1346 1044 L1386 1034 L1388 1064 L1386 1092 L1376 1096 L1376 1070 L1346 1078 Z" class="c3"/>
<path d="M1452 995 L1484 990 L1492 1000 L1490 1032 L1462 1040 L1452 1014 Z" fill="#2a2e2d"/>
<path d="M1394.500 1045 L1444 1023 L1444 1037.600 L1394.500 1061 Z" fill="#0e100f"/>
<text transform="translate(1399 1057) rotate(-24)" font-family="Liberation Sans" font-size="12.500" font-weight="bold" fill="#e8e8e8" letter-spacing="0.500"><tspan class="pl">07 ET 67</tspan><tspan class="pr">46 KC 42</tspan></text>
<path d="M1446 1020 L1458 1016 L1458 1028 L1446 1032 Z" fill="#ececec"/>
</g>
<g id="rwheels">
<use href="#wheel" transform="translate(948.600 1028.600) scale(47.400 50.500)"/>
<use href="#wheel" transform="translate(1284 1079) scale(52.500 56)"/>
</g>
<g id="rigl"><use href="#trailer"/><use href="#rover"/><use href="#rwheels"/></g>
<g id="rigr"><use href="#trailer" transform="matrix(0.8554,0.0361,-0.0736,0.8283,928.37,14.07)"/><use href="#rover" transform="matrix(0.8496,0.0026,-0.0338,0.7858,900.63,63.35)"/><use href="#rwheels" transform="matrix(0.8417,-0.0123,0,0.83,873.4,39.93)"/></g>
</defs>
<!-- right (plain) rig first, then left (camo) rig -->
<g class="rigR"><use href="#rigr"/></g>
<g class="rigL"><use href="#rigl"/></g>
<rect x="92" y="320" width="1.600" height="1238" fill="#a0a0a0"/><rect x="2589.400" y="320" width="1.600" height="1238" fill="#a0a0a0"/>
<!-- close button -->
<circle cx="2540" cy="366.800" r="26" fill="none" stroke="#000" stroke-width="5.600"/>
<path d="M2530 356.800 L2550 376.800 M2550 356.800 L2530 376.800" stroke="#000" stroke-width="5.600" stroke-linecap="round"/>
<!-- thumbnails -->
<path d="M931 1648 L917 1661 L931 1674" fill="none" stroke="#e1251b" stroke-width="6" stroke-linecap="round" stroke-linejoin="round"/>
<path d="M1754 1648 L1767 1661 L1754 1674" fill="none" stroke="#f9b9b5" stroke-width="6" stroke-linecap="round" stroke-linejoin="round"/>
<rect x="981.500" y="1599" width="197" height="121" rx="9" fill="#fff" stroke="#b9b9b9" stroke-width="2.200"/>
<rect x="1230.700" y="1600.200" width="194.500" height="118.500" rx="9" fill="#fff" stroke="#e2231a" stroke-width="4.600"/>
<g transform="translate(1327.500 1661.500) scale(0.1025) translate(-1330 -900)"><g class="rigR"><use href="#rigr"/></g><g class="rigL"><use href="#rigl"/></g></g>
<g class="rigL" transform="translate(1037.500 1653) scale(-0.084 0.084) translate(-1007 -945)"><use href="#rigl"/></g>
<g class="rigR" transform="translate(1120 1665) scale(-0.095 0.095) translate(-1007 -945)"><use href="#rigl"/></g>
</svg>

</div>
<div id="strip">
<div class="a" style="left:1714px;top:0;width:2px;height:40px;background:#3d3d3d"></div>
<div class="a" style="left:1755px;top:0;width:573px;height:38px;background:linear-gradient(90deg,#16141b 0,#15131a 55%,#1d0f2a 75%,#0d1424 100%)"></div>
<div class="a" style="left:1776px;top:5px;font-size:17.500px;line-height:24px;color:#5a5a60;letter-spacing:0.850px">Missed payments may affect your credit score.</div>
<svg style="left:2170px;top:0" width="160" height="38" viewBox="0 0 160 38"><g fill="none" stroke-width="3"><path d="M20 0 V14 H60 V38" stroke="#3a1858"/><path d="M40 0 V8 H80 V38" stroke="#18385a"/><path d="M100 0 V20 H70 V38" stroke="#4a1a50"/><path d="M120 0 V26 H150" stroke="#16405a"/></g><rect x="88" y="0" width="12" height="30" fill="#2a0f3a"/></svg>
<div class="a" style="left:2369px;top:0;width:2px;height:40px;background:#3d3d3d"></div>

</div>
</div>

<div class="a" style="left:2682px;top:1812.500px;width:318px;height:127.500px;border-radius:9px;background:#000"></div>
<div class="a" style="left:2690px;top:1820px;width:302px;height:112px;background:#fff;overflow:hidden">
<svg style="left:0;top:0" width="302" height="112" viewBox="2690 1820 302 112">
<g class="rigL" transform="translate(2765.500 1866) scale(-0.147 0.147) translate(-1007 -945)"><use href="#rigl"/></g>
<g class="rigR" transform="translate(2907.500 1885.500) scale(-0.158 0.158) translate(-1007 -945)"><use href="#rigl"/></g>
</svg></div>

</body></html>
